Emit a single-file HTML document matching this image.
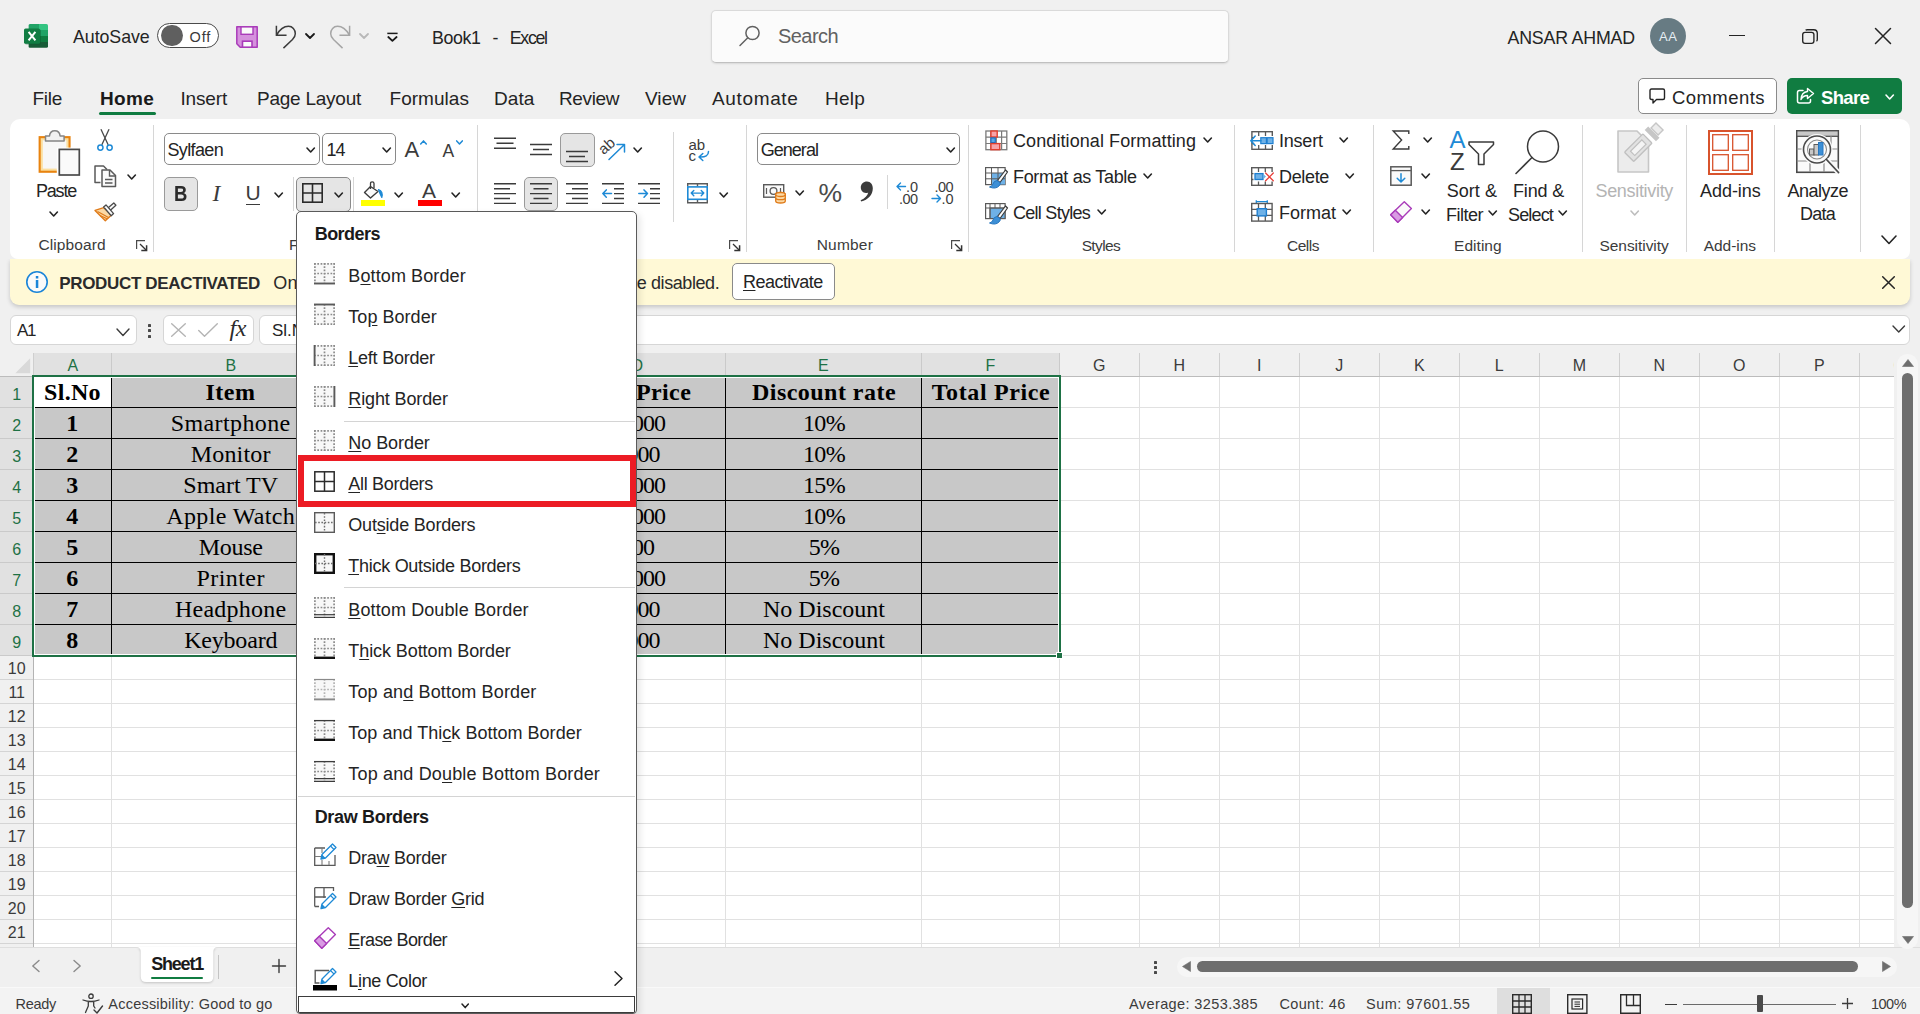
<!DOCTYPE html>
<html>
<head>
<meta charset="utf-8">
<title>Excel</title>
<style>
*{box-sizing:border-box;margin:0;padding:0}
html,body{width:1920px;height:1014px;overflow:hidden;background:#f0f0f0;font-family:"Liberation Sans",sans-serif;color:#242424}
.abs{position:absolute}
.t{position:absolute;white-space:nowrap;line-height:1;color:#242424}
svg{position:absolute;overflow:visible}
#ribbon{position:absolute;left:10px;top:118.7px;width:1900px;height:140.3px;background:#fff;border-radius:10px 10px 8px 8px;}
#notif{position:absolute;left:10px;top:259px;width:1900px;height:45.8px;background:#fff9d6;border-radius:0 0 9px 9px;box-shadow:0 2px 4px rgba(0,0,0,.18);clip-path:inset(0 -12px -12px -12px)}
.vsep{position:absolute;width:1px;background:#d6d6d6}
.grp{position:absolute;white-space:nowrap;line-height:1;font-size:15px;color:#3b3b3b;top:238px}
.combo{position:absolute;background:#fff;border:1px solid #8a8a8a;border-radius:5px}
.btnsel{position:absolute;background:#e5e5e5;border:1px solid #9a9a9a;border-radius:5px}
/* grid */
#grid{position:absolute;left:0;top:0;width:1920px;height:947px;overflow:hidden;clip-path:inset(353px 0 0 0)}
.ch{position:absolute;top:0;height:23px;font-size:17px;line-height:23px;text-align:center;color:#3b3b3b;border-right:1px solid #d0d0d0;background:#f0f0f0}
.ch.sel{background:#e1e1e1;color:#1e7145}
.rh{position:absolute;left:0;width:33px;font-size:17px;text-align:center;color:#3b3b3b;background:#f0f0f0;border-bottom:1px solid #d0d0d0}
.rh.sel{background:#e1e1e1;color:#1e7145}
.gl{position:absolute;background:#e1e1e1}
.cell{position:absolute;background:#c8c8c8;font-family:"Liberation Serif",serif;font-size:23px;text-align:center;color:#000;white-space:nowrap;overflow:hidden}
.bl{position:absolute;background:#000}
/* menu */
#menu{position:absolute;left:296px;top:211px;width:341px;height:803px;background:#fff;border:1px solid #5a5a5a;border-radius:5px 5px 4px 4px;overflow:hidden;box-shadow:3px 3px 7px rgba(0,0,0,.10)}
.mi{position:absolute;left:51px;white-space:nowrap;line-height:1;font-size:17px;color:#242424}
.mh{position:absolute;left:17px;white-space:nowrap;line-height:1;font-size:17px;font-weight:bold;color:#1a1a1a}
.u{text-decoration:underline;text-underline-offset:2px}
</style>
</head>
<body>
<!-- TITLEBAR -->
<div id="titlebar">
<svg style="left:24px;top:24px;" width="24" height="24" viewBox="0 0 24 24">
<defs><clipPath id="xlc"><rect x="4.4" y="0" width="19.6" height="23.8" rx="1.6"/></clipPath></defs>
<g clip-path="url(#xlc)">
<rect x="4.4" y="0" width="10.6" height="6" fill="#21a366"/><rect x="15" y="0" width="9" height="6" fill="#33c481"/>
<rect x="4.4" y="6" width="10.6" height="6" fill="#107c41"/><rect x="15" y="6" width="9" height="6" fill="#21a366"/>
<rect x="4.4" y="12" width="10.6" height="6" fill="#185c37"/><rect x="15" y="12" width="9" height="6" fill="#107c41"/>
<rect x="4.4" y="18" width="19.6" height="6" fill="#185c37"/>
</g>
<rect x="1" y="5.2" width="16" height="15.4" rx="1.5" fill="#0b5a2e" opacity="0.45"/>
<rect x="0" y="4.4" width="16" height="15.4" rx="1.5" fill="#117d43"/>
<path d="M4.6 7.8 L11.4 16.4 M11.4 7.8 L4.6 16.4" stroke="#fff" stroke-width="2" fill="none"/>
</svg>
<div class="t" style="left:73.00px;top:29.00px;font-size:17.8px;letter-spacing:-0.061px;">AutoSave</div>
<div class="abs" style="left:157px;top:22.7px;width:62.2px;height:25.3px;border:1.3px solid #4a4a4a;border-radius:13px;background:#fff"></div>
<div class="abs" style="left:161px;top:24.8px;width:21.6px;height:21.6px;border-radius:50%;background:#5f5f5f"></div>
<div class="t" style="left:189.60px;top:30.00px;font-size:14.5px;letter-spacing:0.775px;color:#3a3a3a;">Off</div>
<svg style="left:236px;top:26px;" width="22" height="22" viewBox="0 0 22 22">
<path d="M0.8 0.8 H21.2 V21.2 H4.2 L0.8 17.8 Z" fill="#d591dd" stroke="#a93bb9" stroke-width="1.5" stroke-linejoin="round"/>
<rect x="5" y="0.9" width="12" height="7.4" fill="#fafafa" stroke="#a93bb9" stroke-width="1.4"/>
<rect x="6.5" y="15.2" width="9.5" height="6" fill="#fafafa" stroke="#a93bb9" stroke-width="1.6"/>
</svg>
<svg style="left:275px;top:25px;" width="22" height="24" viewBox="0 0 22 24"><path d="M1.4 1.5 V10.2 H10.8 M1.8 9.8 C5 4 9.5 1.3 13.5 1.3 C17.5 1.3 20.3 4.5 20.3 8.7 C20.3 11 19.2 12.8 17.5 14.5 L9 22.6" fill="none" stroke="#3b3b3b" stroke-width="1.5" stroke-linecap="square" stroke-linejoin="miter"/></svg>
<svg style="left:306.2px;top:34.4px;" width="8" height="4" viewBox="0 0 8 4"><path d="M0 0 L4.0 4 L8 0" fill="none" stroke="#1a1a1a" stroke-width="1.8" stroke-linecap="round" stroke-linejoin="round"/></svg>
<svg style="left:329px;top:25px;" width="22" height="24" viewBox="0 0 22 24"><g transform="translate(22 0) scale(-1 1)"><path d="M1.4 1.5 V10.2 H10.8 M1.8 9.8 C5 4 9.5 1.3 13.5 1.3 C17.5 1.3 20.3 4.5 20.3 8.7 C20.3 11 19.2 12.8 17.5 14.5 L9 22.6" fill="none" stroke="#a6a6a6" stroke-width="1.5" stroke-linecap="square" stroke-linejoin="miter"/></g></svg>
<svg style="left:360.2px;top:34.4px;" width="8" height="4" viewBox="0 0 8 4"><path d="M0 0 L4.0 4 L8 0" fill="none" stroke="#b8b8b8" stroke-width="1.8" stroke-linecap="round" stroke-linejoin="round"/></svg>
<svg style="left:387px;top:31.5px;" width="11" height="10" viewBox="0 0 11 10"><path d="M0.3 1.4 H10.6" stroke="#1a1a1a" stroke-width="1.5"/><path d="M1.3 5 L5.4 8.8 L9.6 5" fill="none" stroke="#1a1a1a" stroke-width="1.8" stroke-linecap="round" stroke-linejoin="round"/></svg>
<div class="t" style="left:432.00px;top:30.00px;font-size:17.8px;letter-spacing:-0.354px;">Book1</div>
<div class="t" style="left:492.50px;top:30.00px;font-size:17.8px;letter-spacing:0.072px;">-</div>
<div class="t" style="left:509.80px;top:30.00px;font-size:17.8px;letter-spacing:-1.325px;">Excel</div>
<div class="abs" style="left:711px;top:10px;width:518px;height:52.5px;background:#fbfbfb;border:1px solid #dadada;border-bottom-color:#c0c0c0;border-radius:5px;box-shadow:0 1px 2px rgba(0,0,0,.10)"></div>
<svg style="left:739px;top:25px;" width="22" height="22" viewBox="0 0 22 22"><circle cx="13.5" cy="8" r="6.6" fill="none" stroke="#616161" stroke-width="1.5"/><path d="M8.8 12.8 L1 20.5" stroke="#616161" stroke-width="1.5" stroke-linecap="round"/></svg>
<div class="t" style="left:778.00px;top:26.00px;font-size:20px;letter-spacing:-0.562px;color:#616161;">Search</div>
<div class="t" style="left:1507.50px;top:30.00px;font-size:17.8px;letter-spacing:-0.188px;">ANSAR AHMAD</div>
<div class="abs" style="left:1650px;top:17.8px;width:36.4px;height:36.2px;border-radius:50%;background:#677b83"></div>
<div class="t" style="left:1659.00px;top:30.00px;font-size:13px;letter-spacing:0.679px;color:#e6eef3;">AA</div>
<div class="abs" style="left:1729px;top:34.5px;width:16px;height:1.3px;background:#242424;"></div>
<svg style="left:1802.2px;top:28.8px;" width="16" height="15" viewBox="0 0 16 15"><rect x="0.7" y="3.3" width="11.2" height="11" rx="2.3" fill="none" stroke="#242424" stroke-width="1.35"/><path d="M3.6 1.3 Q4.2 0.7 5.4 0.7 H11.6 Q15.3 0.7 15.3 4.3 V10.4 Q15.3 11.6 14.5 12.2" fill="none" stroke="#242424" stroke-width="1.35"/></svg>
<svg style="left:1875px;top:28px;" width="16" height="16" viewBox="0 0 16 16"><path d="M0.5 0.5 L15.5 15.5 M15.5 0.5 L0.5 15.5" stroke="#242424" stroke-width="1.5" stroke-linecap="round"/></svg>
</div>
<!-- TABS -->
<div id="tabs">
<div class="t" style="left:32.50px;top:89.00px;font-size:19px;letter-spacing:-0.279px;">File</div>
<div class="t" style="left:180.50px;top:89.00px;font-size:19px;letter-spacing:-0.170px;">Insert</div>
<div class="t" style="left:257.00px;top:89.00px;font-size:19px;letter-spacing:-0.245px;">Page Layout</div>
<div class="t" style="left:389.50px;top:89.00px;font-size:19px;letter-spacing:0.040px;">Formulas</div>
<div class="t" style="left:494.00px;top:89.00px;font-size:19px;letter-spacing:0.092px;">Data</div>
<div class="t" style="left:559.00px;top:89.00px;font-size:19px;letter-spacing:-0.383px;">Review</div>
<div class="t" style="left:645.00px;top:89.00px;font-size:19px;letter-spacing:0.040px;">View</div>
<div class="t" style="left:712.00px;top:89.00px;font-size:19px;letter-spacing:0.647px;">Automate</div>
<div class="t" style="left:825.00px;top:89.00px;font-size:19px;letter-spacing:0.231px;">Help</div>
<div class="t" style="left:100.00px;top:89.00px;font-size:19px;letter-spacing:0.303px;font-weight:bold;color:#1a1a1a;">Home</div>
<div class="abs" style="left:99px;top:112px;width:57px;height:3px;background:#107c41;border-radius:1.5px"></div>
<div class="abs" style="left:1638px;top:78px;width:138.7px;height:35.5px;background:#fff;border:1px solid #8a8a8a;border-radius:5px"></div>
<svg style="left:1649px;top:88px;" width="17" height="17" viewBox="0 0 17 17"><path d="M2.5 1 H14 Q15.5 1 15.5 2.5 V10 Q15.5 11.5 14 11.5 H7.5 L4 15 V11.5 H2.5 Q1 11.5 1 10 V2.5 Q1 1 2.5 1 Z" fill="none" stroke="#242424" stroke-width="1.4" stroke-linejoin="round"/></svg>
<div class="t" style="left:1671.90px;top:89.00px;font-size:18.5px;letter-spacing:0.458px;">Comments</div>
<div class="abs" style="left:1787px;top:78px;width:115px;height:35.5px;background:#107c41;border-radius:5px"></div>
<svg style="left:1796px;top:87px;" width="19" height="18" viewBox="0 0 19 18"><path d="M7 3.5 H3.5 Q1.5 3.5 1.5 5.5 V14 Q1.5 16 3.5 16 H12.5 Q14.5 16 14.5 14 V12.5" fill="none" stroke="#fff" stroke-width="1.5" stroke-linecap="round"/><path d="M11.5 1.5 L17.5 6.5 L11.5 11.5 V8.5 Q7 8.5 5 12.5 Q5.5 5 11.5 4.5 Z" fill="none" stroke="#fff" stroke-width="1.4" stroke-linejoin="round"/></svg>
<div class="t" style="left:1821.00px;top:89.00px;font-size:18.5px;letter-spacing:-0.683px;font-weight:bold;color:#fff;">Share</div>
<svg style="left:1886.3px;top:95.0px;" width="7.4" height="4.0" viewBox="0 0 7.4 4.0"><path d="M0 0 L3.7 4.0 L7.4 0" fill="none" stroke="#fff" stroke-width="1.6" stroke-linecap="round" stroke-linejoin="round"/></svg>
</div>
<!-- RIBBON -->
<div id="ribbon"></div>
<div id="ribboncontent">
<div class="vsep" style="left:153px;top:125px;height:127px"></div>
<div class="vsep" style="left:477px;top:125px;height:127px"></div>
<div class="vsep" style="left:746px;top:125px;height:127px"></div>
<div class="vsep" style="left:968px;top:125px;height:127px"></div>
<div class="vsep" style="left:1234px;top:125px;height:127px"></div>
<div class="vsep" style="left:1373px;top:125px;height:127px"></div>
<div class="vsep" style="left:1582px;top:125px;height:127px"></div>
<div class="vsep" style="left:1686px;top:125px;height:127px"></div>
<div class="vsep" style="left:1774px;top:125px;height:127px"></div>
<div class="vsep" style="left:1860px;top:125px;height:127px"></div>
<div class="vsep" style="left:293px;top:177px;height:34px"></div>
<div class="vsep" style="left:353px;top:177px;height:34px"></div>
<div class="vsep" style="left:673px;top:132px;height:90px"></div>
<div class="vsep" style="left:886.5px;top:175px;height:34px"></div>
<svg style="left:38px;top:129px;" width="44" height="48" viewBox="0 0 44 48">
<rect x="0.6" y="7.1" width="32" height="36.7" fill="#e8830f"/>
<rect x="2.7" y="9.2" width="27.8" height="32.5" fill="#fbdf9f"/>
<rect x="4.8" y="11.3" width="23.6" height="28.3" fill="#f7f7f7"/>
<path d="M7.5 12 V7 H11.5 Q12 1.8 16.8 1.8 Q21.6 1.8 22.1 7 H26.1 V12 Z" fill="#f1f1f1" stroke="#858585" stroke-width="1.5" stroke-linejoin="round"/>
<rect x="18.8" y="18.6" width="24" height="29" fill="#fff"/>
<rect x="21.3" y="20.4" width="20" height="25.6" fill="#fafafa" stroke="#4a4a4a" stroke-width="1.7"/>
</svg>
<div class="t" style="left:36.00px;top:182.00px;font-size:18px;letter-spacing:-1.206px;">Paste</div>
<svg style="left:50.3px;top:211.5px;" width="7.4" height="4.0" viewBox="0 0 7.4 4.0"><path d="M0 0 L3.7 4.0 L7.4 0" fill="none" stroke="#242424" stroke-width="1.6" stroke-linecap="round" stroke-linejoin="round"/></svg>
<svg style="left:97px;top:129px;" width="16" height="23" viewBox="0 0 16 23">
<path d="M4.2 0.7 L11 15.5 M11.8 0.7 L5 15.5" stroke="#4a4a4a" stroke-width="1.3" fill="none" stroke-linecap="round"/>
<circle cx="3.4" cy="18.6" r="2.6" fill="none" stroke="#1e8ad6" stroke-width="1.5"/>
<circle cx="12.6" cy="18.6" r="2.6" fill="none" stroke="#1e8ad6" stroke-width="1.5"/>
</svg>
<svg style="left:94px;top:165px;" width="23" height="23" viewBox="0 0 23 23">
<path d="M6.5 17.5 H1 V1 H9.5 L13 4.5" fill="none" stroke="#5a5a5a" stroke-width="1.5" stroke-linejoin="round"/>
<path d="M8 5 H16 L21.5 10.5 V21.5 H8 Z" fill="#fafafa" stroke="#5a5a5a" stroke-width="1.5" stroke-linejoin="round"/>
<path d="M15.5 5 V11 H21.5" fill="none" stroke="#5a5a5a" stroke-width="1.4"/>
<path d="M11 14.5 H18.5 M11 18 H18.5" stroke="#5a5a5a" stroke-width="1.3"/>
</svg>
<svg style="left:127.8px;top:174.5px;" width="7.4" height="4.0" viewBox="0 0 7.4 4.0"><path d="M0 0 L3.7 4.0 L7.4 0" fill="none" stroke="#242424" stroke-width="1.6" stroke-linecap="round" stroke-linejoin="round"/></svg>
<svg style="left:94px;top:202px;" width="24" height="20" viewBox="0 0 24 20">
<path d="M1 8.4 L9.7 5.7 L17.8 12.8 L11.3 18.7 Z" fill="#fbd9a5" stroke="#e07b1a" stroke-width="1.4" stroke-linejoin="round"/>
<path d="M3.5 9.5 L14.5 15.5 M6 13.5 L13 16.8" stroke="#e07b1a" stroke-width="1.1" fill="none"/>
<path d="M14.2 5.8 L19.8 0.9 L21.9 3.3 L16.4 8.2 Z" fill="#fafafa" stroke="#4a4a4a" stroke-width="1.3" stroke-linejoin="round"/>
<path d="M9.6 5 L12 2.9 L19.6 11.6 L17.2 13.7 Z" fill="#fafafa" stroke="#4a4a4a" stroke-width="1.3" stroke-linejoin="round"/>
</svg>
<div class="t" style="left:38.50px;top:237.00px;font-size:15.5px;letter-spacing:0.084px;color:#3b3b3b;">Clipboard</div>
<svg style="left:136px;top:239.5px;" width="12" height="12" viewBox="0 0 12 12"><path d="M0.6 9 V0.6 H9" fill="none" stroke="#4a4a4a" stroke-width="1.2"/><path d="M4 4 L10.3 10.3" stroke="#333" stroke-width="1.3" fill="none"/><path d="M5.3 10.6 H10.6 V5.3" fill="none" stroke="#333" stroke-width="1.5"/></svg>
<div class="t" style="left:289.00px;top:237.00px;font-size:15.5px;color:#3b3b3b;">Font</div>
<div class="combo" style="left:164px;top:133px;width:155.5px;height:32px"></div>
<div class="t" style="left:167.50px;top:141.00px;font-size:18px;letter-spacing:-0.648px;">Sylfaen</div>
<svg style="left:307.3px;top:147.7px;" width="7.4" height="4.0" viewBox="0 0 7.4 4.0"><path d="M0 0 L3.7 4.0 L7.4 0" fill="none" stroke="#242424" stroke-width="1.6" stroke-linecap="round" stroke-linejoin="round"/></svg>
<div class="combo" style="left:322px;top:133px;width:74px;height:32px"></div>
<div class="t" style="left:326.50px;top:141.00px;font-size:18px;letter-spacing:-1.011px;">14</div>
<svg style="left:383.3px;top:147.7px;" width="7.4" height="4.0" viewBox="0 0 7.4 4.0"><path d="M0 0 L3.7 4.0 L7.4 0" fill="none" stroke="#242424" stroke-width="1.6" stroke-linecap="round" stroke-linejoin="round"/></svg>
<div class="t" style="left:404.50px;top:139.00px;font-size:22px;letter-spacing:1.326px;color:#3b3b3b;">A</div>
<svg style="left:419.5px;top:140px;" width="7" height="5" viewBox="0 0 7 5"><path d="M0.7 4 L3.5 0.9 L6.3 4" fill="none" stroke="#1e8ad6" stroke-width="1.5" stroke-linecap="round" stroke-linejoin="round"/></svg>
<div class="t" style="left:442.50px;top:143.00px;font-size:17.5px;letter-spacing:1.328px;color:#3b3b3b;">A</div>
<svg style="left:455.5px;top:140px;" width="7" height="5" viewBox="0 0 7 5"><path d="M0.7 0.9 L3.5 4 L6.3 0.9" fill="none" stroke="#1e8ad6" stroke-width="1.5" stroke-linecap="round" stroke-linejoin="round"/></svg>
<div class="btnsel" style="left:164px;top:177px;width:34px;height:34px"></div>
<div class="t" style="left:174.30px;top:184.00px;font-size:21.5px;font-weight:bold;color:#2b2b2b;transform:scaleX(.86);transform-origin:left center;">B</div>
<div class="t" style="left:212.50px;top:182.00px;font-size:23.5px;font-style:italic;color:#3b3b3b;font-family:'Liberation Serif',serif;">I</div>
<div class="t" style="left:245.50px;top:182.00px;font-size:21px;letter-spacing:-1.166px;color:#3b3b3b;">U</div>
<div class="abs" style="left:246px;top:203.6px;width:13.5px;height:1.4px;background:#3b3b3b;"></div>
<svg style="left:275.3px;top:193.0px;" width="7.4" height="4.0" viewBox="0 0 7.4 4.0"><path d="M0 0 L3.7 4.0 L7.4 0" fill="none" stroke="#242424" stroke-width="1.6" stroke-linecap="round" stroke-linejoin="round"/></svg>
<div class="btnsel" style="left:296px;top:176.5px;width:55px;height:35px;border-color:#8a8a8a"></div>
<svg style="left:301.5px;top:183px;" width="21" height="20" viewBox="0 0 21 20"><rect x="0.8" y="0.8" width="19.4" height="18.4" fill="none" stroke="#2b2b2b" stroke-width="1.6"/><path d="M10.5 0.8 V19.2 M0.8 10 H20.2" stroke="#2b2b2b" stroke-width="1.6"/></svg>
<svg style="left:334.8px;top:193.0px;" width="7.4" height="4.0" viewBox="0 0 7.4 4.0"><path d="M0 0 L3.7 4.0 L7.4 0" fill="none" stroke="#242424" stroke-width="1.6" stroke-linecap="round" stroke-linejoin="round"/></svg>
<svg style="left:361px;top:181px;" width="25" height="18" viewBox="0 0 25 18">
<path d="M9.5 5.5 L3.5 11.5 L9.5 17 L17 10.5 Z" fill="#fafafa" stroke="#3b3b3b" stroke-width="1.4" stroke-linejoin="round"/>
<path d="M9.5 8 V2.5 Q9.5 0.8 11.2 0.8 Q13 0.8 13 2.5 V7" fill="none" stroke="#3b3b3b" stroke-width="1.3"/>
<path d="M17.5 8.5 Q22.5 10.5 20.8 16.5 Q19 13 17.5 8.5 Z" fill="#1e8ad6" stroke="#1e8ad6" stroke-width="1.2" stroke-linejoin="round"/>
</svg>
<div class="abs" style="left:361px;top:200px;width:24px;height:5.7px;background:#ffff00;"></div>
<svg style="left:395.3px;top:193.0px;" width="7.4" height="4.0" viewBox="0 0 7.4 4.0"><path d="M0 0 L3.7 4.0 L7.4 0" fill="none" stroke="#242424" stroke-width="1.6" stroke-linecap="round" stroke-linejoin="round"/></svg>
<div class="t" style="left:422.00px;top:180.00px;font-size:21px;letter-spacing:1.493px;color:#3b3b3b;">A</div>
<div class="abs" style="left:418px;top:200px;width:24px;height:5.7px;background:#ff0000;"></div>
<svg style="left:452.3px;top:193.0px;" width="7.4" height="4.0" viewBox="0 0 7.4 4.0"><path d="M0 0 L3.7 4.0 L7.4 0" fill="none" stroke="#242424" stroke-width="1.6" stroke-linecap="round" stroke-linejoin="round"/></svg>
<svg style="left:494px;top:136px;" width="24" height="14" viewBox="0 0 24 14"><path d="M0 2.2 H22 M2.5 7.2 H19.5 M0 12.2 H22 " stroke="#3b3b3b" stroke-width="1.4" fill="none"/></svg>
<svg style="left:530px;top:142px;" width="24" height="14" viewBox="0 0 24 14"><path d="M0 2.5 H22 M3 7.5 H19 M0 12.5 H22 " stroke="#3b3b3b" stroke-width="1.4" fill="none"/></svg>
<div class="btnsel" style="left:560px;top:133px;width:34.5px;height:34px"></div>
<svg style="left:566px;top:149px;" width="24" height="14" viewBox="0 0 24 14"><path d="M0 2.5 H22 M3 7.5 H19 M0 12.5 H22 " stroke="#3b3b3b" stroke-width="1.4" fill="none"/></svg>
<svg style="left:601px;top:137px;" width="25" height="24" viewBox="0 0 25 24">
<text x="-0.5" y="14.5" font-family="Liberation Sans" font-size="15" fill="#3b3b3b" transform="rotate(-42 6 12)">ab</text>
<path d="M8 22.5 L23 8 M16 7.5 H23.5 V15" fill="none" stroke="#1e8ad6" stroke-width="1.5" stroke-linecap="round" stroke-linejoin="round"/>
</svg>
<svg style="left:633.8px;top:147.7px;" width="7.4" height="4.0" viewBox="0 0 7.4 4.0"><path d="M0 0 L3.7 4.0 L7.4 0" fill="none" stroke="#242424" stroke-width="1.6" stroke-linecap="round" stroke-linejoin="round"/></svg>
<svg style="left:494px;top:183px;" width="24" height="21" viewBox="0 0 24 21"><path d="M0 0.8 H22 M0 5.7 H16 M0 10.6 H22 M0 15.5 H16 M0 20.4 H22 " stroke="#3b3b3b" stroke-width="1.4" fill="none"/></svg>
<div class="btnsel" style="left:524px;top:177px;width:34px;height:34px"></div>
<svg style="left:530px;top:183px;" width="24" height="21" viewBox="0 0 24 21"><path d="M0 0.8 H22 M3.5 5.7 H18.5 M0 10.6 H22 M3.5 15.5 H18.5 M0 20.4 H22 " stroke="#3b3b3b" stroke-width="1.4" fill="none"/></svg>
<svg style="left:566px;top:183px;" width="24" height="21" viewBox="0 0 24 21"><path d="M0 0.8 H22 M6 5.7 H22 M0 10.6 H22 M6 15.5 H22 M0 20.4 H22 " stroke="#3b3b3b" stroke-width="1.4" fill="none"/></svg>
<svg style="left:601.5px;top:183px;" width="24" height="21" viewBox="0 0 24 21"><path d="M0 0.8 H22 M12 5.7 H22 M12 10.6 H22 M12 15.5 H22 M0 20.4 H22 " stroke="#3b3b3b" stroke-width="1.4" fill="none"/><path d="M0.8 10.6 H9.5 M4.3 6.9 L0.8 10.6 L4.3 14.3" fill="none" stroke="#1e8ad6" stroke-width="1.5" stroke-linecap="round" stroke-linejoin="round"/></svg>
<svg style="left:637.5px;top:183px;" width="24" height="21" viewBox="0 0 24 21"><path d="M0 0.8 H22 M12 5.7 H22 M12 10.6 H22 M12 15.5 H22 M0 20.4 H22 " stroke="#3b3b3b" stroke-width="1.4" fill="none"/><path d="M0.8 10.6 H9.5 M6 6.9 L9.5 10.6 L6 14.3" fill="none" stroke="#1e8ad6" stroke-width="1.5" stroke-linecap="round" stroke-linejoin="round"/></svg>
<svg style="left:687px;top:139px;" width="25" height="25" viewBox="0 0 25 25">
<text x="1.5" y="11" font-family="Liberation Sans" font-size="15" fill="#3b3b3b" textLength="16.5">ab</text>
<text x="1.5" y="21.5" font-family="Liberation Sans" font-size="15" fill="#3b3b3b">c</text>
<path d="M21.5 12.5 Q21.5 18.5 12.5 18 M15.8 14.5 L12 18 L15.8 21.5" fill="none" stroke="#1e8ad6" stroke-width="1.5" stroke-linecap="round" stroke-linejoin="round"/>
</svg>
<svg style="left:686.7px;top:183px;" width="22" height="21" viewBox="0 0 22 21">
<path d="M0.7 3.6 V0.7 H20.3 V3.6 M10.5 0.7 V3.6 M0.7 16.6 V19.7 H20.3 V16.6 M10.5 16.6 V19.7" fill="none" stroke="#5a5a5a" stroke-width="1.4"/>
<rect x="0.8" y="3.9" width="19.4" height="12.4" fill="#fff" stroke="#1e8ad6" stroke-width="1.6"/>
<path d="M4.2 10.1 H16.8 M6.8 7.5 L4.2 10.1 L6.8 12.7 M14.2 7.5 L16.8 10.1 L14.2 12.7" fill="none" stroke="#1e8ad6" stroke-width="1.4" stroke-linecap="round" stroke-linejoin="round"/>
</svg>
<svg style="left:720.3px;top:193.0px;" width="7.4" height="4.0" viewBox="0 0 7.4 4.0"><path d="M0 0 L3.7 4.0 L7.4 0" fill="none" stroke="#242424" stroke-width="1.6" stroke-linecap="round" stroke-linejoin="round"/></svg>
<svg style="left:729px;top:239.5px;" width="12" height="12" viewBox="0 0 12 12"><path d="M0.6 9 V0.6 H9" fill="none" stroke="#4a4a4a" stroke-width="1.2"/><path d="M4 4 L10.3 10.3" stroke="#333" stroke-width="1.3" fill="none"/><path d="M5.3 10.6 H10.6 V5.3" fill="none" stroke="#333" stroke-width="1.5"/></svg>
<div class="combo" style="left:757px;top:133px;width:202.5px;height:32px"></div>
<div class="t" style="left:760.70px;top:141.00px;font-size:18px;letter-spacing:-0.963px;">General</div>
<svg style="left:946.8px;top:147.7px;" width="7.4" height="4.0" viewBox="0 0 7.4 4.0"><path d="M0 0 L3.7 4.0 L7.4 0" fill="none" stroke="#242424" stroke-width="1.6" stroke-linecap="round" stroke-linejoin="round"/></svg>
<svg style="left:763px;top:184px;" width="24" height="20" viewBox="0 0 24 20">
<rect x="0.7" y="0.7" width="20" height="12.5" fill="#fafafa" stroke="#5a5a5a" stroke-width="1.4"/>
<circle cx="10.5" cy="7" r="3.4" fill="none" stroke="#5a5a5a" stroke-width="1.3"/>
<path d="M3.5 4 V10 M17.5 4 V10" stroke="#5a5a5a" stroke-width="1.2"/>
<ellipse cx="17.5" cy="10.5" rx="4.8" ry="2" fill="#fbd9a5" stroke="#e07b1a" stroke-width="1.3"/>
<path d="M12.7 10.5 V17 Q12.7 19 17.5 19 Q22.3 19 22.3 17 V10.5 M12.7 13.7 Q12.7 15.7 17.5 15.7 Q22.3 15.7 22.3 13.7" fill="#fbd9a5" stroke="#e07b1a" stroke-width="1.3"/>
<ellipse cx="17.5" cy="10.5" rx="4.8" ry="2" fill="#fbd9a5" stroke="#e07b1a" stroke-width="1.3"/>
</svg>
<svg style="left:796.3px;top:191.0px;" width="7.4" height="4.0" viewBox="0 0 7.4 4.0"><path d="M0 0 L3.7 4.0 L7.4 0" fill="none" stroke="#242424" stroke-width="1.6" stroke-linecap="round" stroke-linejoin="round"/></svg>
<div class="t" style="left:818.50px;top:180.00px;font-size:26.5px;letter-spacing:-0.563px;color:#4a4a4a;">%</div>
<svg style="left:859px;top:181px;" width="15" height="22" viewBox="0 0 15 22"><path d="M8 0.6 C11.6 0.6 13.8 3.6 13.8 7.6 C13.8 14 9 19 2.2 20.6 L1.6 19.2 C6 17.2 8.6 14.6 9.2 11.4 C8.6 11.8 7.8 12 7 12 C3.8 12 1.8 9.6 1.8 6.6 C1.8 3.2 4.4 0.6 8 0.6 Z" fill="#3b3b3b"/></svg>
<svg style="left:896px;top:180px;" width="23" height="25" viewBox="0 0 23 25">
<path d="M1 6.5 H9.5 M4.5 3 L1 6.5 L4.5 10" fill="none" stroke="#1e8ad6" stroke-width="1.4" stroke-linecap="round" stroke-linejoin="round"/>
<text x="10" y="11.8" font-family="Liberation Sans" font-size="14.5" fill="#3b3b3b">.0</text>
<text x="3" y="24" font-family="Liberation Sans" font-size="14.5" fill="#3b3b3b" textLength="19">.00</text>
</svg>
<svg style="left:931px;top:180px;" width="23" height="25" viewBox="0 0 23 25">
<text x="3.5" y="11.8" font-family="Liberation Sans" font-size="14.5" fill="#3b3b3b" textLength="19">.00</text>
<path d="M1 18.5 H9.5 M6 15 L9.5 18.5 L6 22" fill="none" stroke="#1e8ad6" stroke-width="1.4" stroke-linecap="round" stroke-linejoin="round"/>
<text x="10.5" y="24" font-family="Liberation Sans" font-size="14.5" fill="#3b3b3b">.0</text>
</svg>
<div class="t" style="left:816.70px;top:237.00px;font-size:15.5px;letter-spacing:0.195px;color:#3b3b3b;">Number</div>
<svg style="left:951px;top:239.5px;" width="12" height="12" viewBox="0 0 12 12"><path d="M0.6 9 V0.6 H9" fill="none" stroke="#4a4a4a" stroke-width="1.2"/><path d="M4 4 L10.3 10.3" stroke="#333" stroke-width="1.3" fill="none"/><path d="M5.3 10.6 H10.6 V5.3" fill="none" stroke="#333" stroke-width="1.5"/></svg>
<svg style="left:985px;top:130px;" width="23" height="21" viewBox="0 0 23 21">
<rect x="0.9" y="1" width="20.9" height="18.7" fill="#fff" stroke="#7a7a7a" stroke-width="1.3"/>
<path d="M0.9 7.2 H21.8 M0.9 13.5 H21.8 M5.9 1 V19.7 M11.3 1 V19.7 M16.6 1 V19.7" stroke="#7a7a7a" stroke-width="1.2" fill="none"/>
<rect x="5.9" y="1" width="6.3" height="6" fill="#f7a3a8" stroke="#e03e2d" stroke-width="1.4"/>
<rect x="5.9" y="7.9" width="4.4" height="4.7" fill="#5aa7e6" stroke="#1e6fc0" stroke-width="1.2"/>
<rect x="5.9" y="13.6" width="8.9" height="6.1" fill="#f7a3a8" stroke="#e03e2d" stroke-width="1.4"/>
</svg>
<div class="t" style="left:1013.00px;top:132.00px;font-size:18px;letter-spacing:0.087px;">Conditional Formatting</div>
<svg style="left:1203.6px;top:137.5px;" width="7.4" height="4.0" viewBox="0 0 7.4 4.0"><path d="M0 0 L3.7 4.0 L7.4 0" fill="none" stroke="#242424" stroke-width="1.6" stroke-linecap="round" stroke-linejoin="round"/></svg>
<svg style="left:985px;top:166px;" width="24" height="22" viewBox="0 0 24 22">
<rect x="0.6" y="1.6" width="19.5" height="17" fill="#fff" stroke="#5a5a5a" stroke-width="1.2"/>
<rect x="6.5" y="7" width="13.5" height="11.5" fill="#6fb1e6"/>
<path d="M0.6 7 H20 M0.6 12.8 H20 M6.5 1.6 V18.6 M13 1.6 V18.6" stroke="#5a5a5a" stroke-width="1" fill="none"/>
<g transform="translate(0 0)"><path d="M20.5 4 L12.5 14.5 L15 16.5 L22.5 6 Z" fill="#fafafa" stroke="#3b3b3b" stroke-width="1.2" stroke-linejoin="round"/><path d="M12 14.5 Q8.5 15 8 18 Q7 20.5 4.5 21 Q10.5 23.5 14 20 Q16 18 15 16.5 Z" fill="#3c8fd6" stroke="#2877c0" stroke-width="1"/></g></svg>
<div class="t" style="left:1013.00px;top:168.00px;font-size:18px;letter-spacing:-0.335px;">Format as Table</div>
<svg style="left:1143.6px;top:173.5px;" width="7.4" height="4.0" viewBox="0 0 7.4 4.0"><path d="M0 0 L3.7 4.0 L7.4 0" fill="none" stroke="#242424" stroke-width="1.6" stroke-linecap="round" stroke-linejoin="round"/></svg>
<svg style="left:985px;top:202px;" width="24" height="22" viewBox="0 0 24 22">
<rect x="0.6" y="1.6" width="19.5" height="15" fill="#fff" stroke="#5a5a5a" stroke-width="1.2"/>
<rect x="5" y="6" width="15" height="10.5" fill="#6fb1e6" stroke="#5a5a5a" stroke-width="1"/>
<path d="M0.6 6 H20 M5 1.6 V16.6 M10 1.6 V6 M15 1.6 V6" stroke="#5a5a5a" stroke-width="1" fill="none"/>
<g transform="translate(0 0)"><path d="M20.5 4 L12.5 14.5 L15 16.5 L22.5 6 Z" fill="#fafafa" stroke="#3b3b3b" stroke-width="1.2" stroke-linejoin="round"/><path d="M12 14.5 Q8.5 15 8 18 Q7 20.5 4.5 21 Q10.5 23.5 14 20 Q16 18 15 16.5 Z" fill="#3c8fd6" stroke="#2877c0" stroke-width="1"/></g></svg>
<div class="t" style="left:1013.00px;top:204.00px;font-size:18px;letter-spacing:-0.730px;">Cell Styles</div>
<svg style="left:1097.6px;top:209.5px;" width="7.4" height="4.0" viewBox="0 0 7.4 4.0"><path d="M0 0 L3.7 4.0 L7.4 0" fill="none" stroke="#242424" stroke-width="1.6" stroke-linecap="round" stroke-linejoin="round"/></svg>
<div class="t" style="left:1081.70px;top:238.00px;font-size:15.5px;letter-spacing:-0.651px;color:#3b3b3b;">Styles</div>
<svg style="left:1250px;top:130.5px;" width="25" height="19" viewBox="0 0 25 19"><g transform="translate(1.2 0)"><rect x="0.7" y="0.7" width="20.4" height="17.6" fill="#fff" stroke="#5a5a5a" stroke-width="1.4"/>
<path d="M0.7 6.6 H21.1 M0.7 12.5 H21.1 M7.5 0.7 V18.3 M14.3 0.7 V18.3" stroke="#5a5a5a" stroke-width="1.3" fill="none"/><rect x="3" y="5" width="19.5" height="9" fill="#fff"/><rect x="9.6" y="6.7" width="5.6" height="5.9" fill="#6fb1e6" stroke="#1e7fd0" stroke-width="1.2"/><rect x="16" y="6.7" width="5.8" height="5.9" fill="#6fb1e6" stroke="#1e7fd0" stroke-width="1.2"/></g><path d="M0.8 9.7 H11 M5.2 5 L0.8 9.7 L5.2 14.4" fill="none" stroke="#1e8ad6" stroke-width="1.5" stroke-linecap="round" stroke-linejoin="round"/></svg>
<div class="t" style="left:1279.00px;top:132.00px;font-size:18px;letter-spacing:-0.220px;">Insert</div>
<svg style="left:1339.6px;top:137.5px;" width="7.4" height="4.0" viewBox="0 0 7.4 4.0"><path d="M0 0 L3.7 4.0 L7.4 0" fill="none" stroke="#242424" stroke-width="1.6" stroke-linecap="round" stroke-linejoin="round"/></svg>
<svg style="left:1251.2px;top:166.5px;" width="24" height="19" viewBox="0 0 24 19"><rect x="0.7" y="0.7" width="20.4" height="17.6" fill="#fff" stroke="#5a5a5a" stroke-width="1.4"/>
<path d="M0.7 6.6 H21.1 M0.7 12.5 H21.1 M7.5 0.7 V18.3 M14.3 0.7 V18.3" stroke="#5a5a5a" stroke-width="1.3" fill="none"/><rect x="2.5" y="5" width="20.5" height="9.5" fill="#fff"/><rect x="4" y="6.6" width="8" height="5.9" fill="#6fb1e6" stroke="#1e7fd0" stroke-width="1.3"/><path d="M12.5 7.2 L15 9.6 L12.5 12 Z" fill="#6fb1e6"/><path d="M14.6 6 L22.3 13.8 M22.3 6 L14.6 13.8" stroke="#e8403a" stroke-width="1.3" stroke-linecap="round"/></svg>
<div class="t" style="left:1279.00px;top:168.00px;font-size:18px;letter-spacing:-0.339px;">Delete</div>
<svg style="left:1345.6px;top:173.5px;" width="7.4" height="4.0" viewBox="0 0 7.4 4.0"><path d="M0 0 L3.7 4.0 L7.4 0" fill="none" stroke="#242424" stroke-width="1.6" stroke-linecap="round" stroke-linejoin="round"/></svg>
<svg style="left:1251.2px;top:199.5px;" width="24" height="22" viewBox="0 0 24 22"><path d="M5.3 1.7 H16.3 M5.3 0.2 V3.4 M16.3 0.2 V3.4" stroke="#1e8ad6" stroke-width="1.3" fill="none"/><g transform="translate(0 2.8)"><rect x="0.7" y="0.7" width="20.4" height="17.6" fill="#fff" stroke="#5a5a5a" stroke-width="1.4"/>
<path d="M0.7 6.6 H21.1 M0.7 12.5 H21.1 M7.5 0.7 V18.3 M14.3 0.7 V18.3" stroke="#5a5a5a" stroke-width="1.3" fill="none"/><rect x="6.2" y="5.9" width="9.2" height="7.2" fill="#6fb1e6" stroke="#1e7fd0" stroke-width="1.4"/></g></svg>
<div class="t" style="left:1279.00px;top:204.00px;font-size:18px;letter-spacing:-0.001px;">Format</div>
<svg style="left:1342.6px;top:209.5px;" width="7.4" height="4.0" viewBox="0 0 7.4 4.0"><path d="M0 0 L3.7 4.0 L7.4 0" fill="none" stroke="#242424" stroke-width="1.6" stroke-linecap="round" stroke-linejoin="round"/></svg>
<div class="t" style="left:1287.00px;top:238.00px;font-size:15.5px;letter-spacing:-0.490px;color:#3b3b3b;">Cells</div>
<svg style="left:1392px;top:130px;" width="19" height="20" viewBox="0 0 19 20"><path d="M16.8 4 V1 H1.2 L9.6 10 L1.2 19 H16.8 V16" fill="none" stroke="#3b3b3b" stroke-width="1.4" stroke-linejoin="miter"/></svg>
<svg style="left:1423.6px;top:137.5px;" width="7.4" height="4.0" viewBox="0 0 7.4 4.0"><path d="M0 0 L3.7 4.0 L7.4 0" fill="none" stroke="#242424" stroke-width="1.6" stroke-linecap="round" stroke-linejoin="round"/></svg>
<svg style="left:1390px;top:166px;" width="22" height="20" viewBox="0 0 22 20"><rect x="0.8" y="0.8" width="20.4" height="18.4" fill="#fafafa" stroke="#5a5a5a" stroke-width="1.5"/><path d="M0.8 4.6 H21.2" stroke="#5a5a5a" stroke-width="1.3"/><path d="M11 7.8 V15.8 M7.2 12.2 L11 16 L14.8 12.2" fill="none" stroke="#1e8ad6" stroke-width="1.5" stroke-linecap="round" stroke-linejoin="round"/></svg>
<svg style="left:1422.3px;top:173.5px;" width="7.4" height="4.0" viewBox="0 0 7.4 4.0"><path d="M0 0 L3.7 4.0 L7.4 0" fill="none" stroke="#242424" stroke-width="1.6" stroke-linecap="round" stroke-linejoin="round"/></svg>
<svg style="left:1390px;top:201px;" width="23" height="22" viewBox="0 0 23 22"><path d="M14.3 0.8 L21.4 7.6 L7.8 21.2 L0.7 13.8 Z" fill="#fafafa" stroke="#a93bb9" stroke-width="1.4" stroke-linejoin="round"/><path d="M5.3 9.2 L12.6 16.4 L7.8 21.2 L0.7 13.8 Z" fill="#d99be3" stroke="#a93bb9" stroke-width="1.4" stroke-linejoin="round"/></svg>
<svg style="left:1422.3px;top:209.5px;" width="7.4" height="4.0" viewBox="0 0 7.4 4.0"><path d="M0 0 L3.7 4.0 L7.4 0" fill="none" stroke="#242424" stroke-width="1.6" stroke-linecap="round" stroke-linejoin="round"/></svg>
<div class="t" style="left:1449.50px;top:128.00px;font-size:24px;letter-spacing:1.992px;color:#1e8ad6;">A</div>
<div class="t" style="left:1450.00px;top:150.00px;font-size:24px;letter-spacing:2.340px;color:#3b3b3b;">Z</div>
<svg style="left:1468px;top:141px;" width="27" height="25" viewBox="0 0 27 25"><path d="M1 1 H25.5 V3.5 L16 13 V23.5 H10.5 V13 L1 3.5 Z" fill="none" stroke="#3b3b3b" stroke-width="1.5" stroke-linejoin="round"/></svg>
<div class="t" style="left:1446.70px;top:182.00px;font-size:18px;letter-spacing:0.047px;">Sort &amp;</div>
<div class="t" style="left:1446.00px;top:206.00px;font-size:18px;letter-spacing:-0.500px;">Filter</div>
<svg style="left:1489.3px;top:211.0px;" width="7.4" height="4.0" viewBox="0 0 7.4 4.0"><path d="M0 0 L3.7 4.0 L7.4 0" fill="none" stroke="#242424" stroke-width="1.6" stroke-linecap="round" stroke-linejoin="round"/></svg>
<svg style="left:1515px;top:129px;" width="46" height="46" viewBox="0 0 46 46"><circle cx="28" cy="17.5" r="15.5" fill="none" stroke="#3b3b3b" stroke-width="1.5"/><path d="M17 28.5 L1 44.5" stroke="#3b3b3b" stroke-width="1.6" stroke-linecap="round"/></svg>
<div class="t" style="left:1513.00px;top:182.00px;font-size:18px;letter-spacing:-0.170px;">Find &amp;</div>
<div class="t" style="left:1508.00px;top:206.00px;font-size:18px;letter-spacing:-0.838px;">Select</div>
<svg style="left:1559.3px;top:211.0px;" width="7.4" height="4.0" viewBox="0 0 7.4 4.0"><path d="M0 0 L3.7 4.0 L7.4 0" fill="none" stroke="#242424" stroke-width="1.6" stroke-linecap="round" stroke-linejoin="round"/></svg>
<div class="t" style="left:1454.00px;top:238.00px;font-size:15.5px;letter-spacing:0.044px;color:#3b3b3b;">Editing</div>
<svg style="left:1617px;top:127px;" width="43" height="47" viewBox="0 0 43 47">
<path d="M1 4 H20 L31.5 15.5 V45 H1 Z" fill="#ececec" stroke="#c6c6c6" stroke-width="1.6" stroke-linejoin="round"/>
<g transform="rotate(45 22 20)"><rect x="15.5" y="8" width="13" height="26" rx="1" fill="#e2e2e2" stroke="#c0c0c0" stroke-width="1.4"/><rect x="19" y="13" width="6" height="16" fill="#f4f4f4" stroke="#c0c0c0" stroke-width="1.2"/><rect x="14" y="-1" width="16" height="5" fill="#c6c6c6"/><rect x="17" y="-9" width="10" height="7" fill="#ececec" stroke="#c6c6c6" stroke-width="1.4"/></g>
</svg>
<div class="t" style="left:1595.50px;top:182.00px;font-size:18px;letter-spacing:-0.321px;color:#b4b4b4;">Sensitivity</div>
<svg style="left:1630.6px;top:211.3px;" width="7.4" height="4.0" viewBox="0 0 7.4 4.0"><path d="M0 0 L3.7 4.0 L7.4 0" fill="none" stroke="#bdbdbd" stroke-width="1.6" stroke-linecap="round" stroke-linejoin="round"/></svg>
<div class="t" style="left:1599.50px;top:238.00px;font-size:15.5px;letter-spacing:-0.052px;color:#3b3b3b;">Sensitivity</div>
<svg style="left:1708px;top:129.5px;" width="45" height="45" viewBox="0 0 45 45"><rect x="1" y="1" width="43" height="43" fill="none" stroke="#d8532c" stroke-width="2"/><rect x="4.7" y="4.7" width="15.6" height="15.6" fill="none" stroke="#d8532c" stroke-width="1.3"/><rect x="24.7" y="4.7" width="15.6" height="15.6" fill="none" stroke="#d8532c" stroke-width="1.3"/><rect x="4.7" y="24.7" width="15.6" height="15.6" fill="none" stroke="#d8532c" stroke-width="1.3"/><rect x="24.7" y="24.7" width="15.6" height="15.6" fill="none" stroke="#d8532c" stroke-width="1.3"/></svg>
<div class="t" style="left:1700.00px;top:182.00px;font-size:18px;letter-spacing:-0.047px;">Add-ins</div>
<div class="t" style="left:1703.70px;top:238.00px;font-size:15.5px;letter-spacing:-0.036px;color:#3b3b3b;">Add-ins</div>
<svg style="left:1796px;top:130px;" width="44" height="44" viewBox="0 0 44 44">
<rect x="0.8" y="0.8" width="41.5" height="41.5" fill="#fafafa" stroke="#4a4a4a" stroke-width="1.6"/>
<rect x="0.8" y="0.8" width="41.5" height="5.5" fill="#c8c8c8" stroke="#4a4a4a" stroke-width="1.2"/>
<path d="M0.8 19 H42 M0.8 31 H42 M14 31 V42 M28 31 V42 M35 6 V19" stroke="#8a8a8a" stroke-width="1.2"/>
<circle cx="21" cy="19.5" r="13.5" fill="#fafafa" stroke="#fafafa" stroke-width="4"/>
<circle cx="21" cy="19.5" r="13.5" fill="#fafafa" stroke="#4a4a4a" stroke-width="1.6"/>
<circle cx="21" cy="19.5" r="9.5" fill="none" stroke="#8a8a8a" stroke-width="1.1"/>
<rect x="13.5" y="19" width="4.5" height="6" fill="#c8c8c8" stroke="#5a5a5a" stroke-width="1"/>
<rect x="18" y="14.5" width="4.5" height="10.5" fill="#c8c8c8" stroke="#5a5a5a" stroke-width="1"/>
<rect x="22.5" y="12.5" width="4.5" height="12.5" fill="#3c8fd6" stroke="#2877c0" stroke-width="1"/>
<path d="M30.5 29.5 L42.5 42.5" stroke="#fafafa" stroke-width="5"/>
<path d="M30.5 29.5 L42.5 42.5" stroke="#4a4a4a" stroke-width="1.8" stroke-linecap="round"/>
</svg>
<div class="t" style="left:1787.50px;top:182.00px;font-size:18px;letter-spacing:-0.505px;">Analyze</div>
<div class="t" style="left:1800.00px;top:205.00px;font-size:18px;letter-spacing:-0.755px;">Data</div>
<svg style="left:1882.0px;top:235.75px;" width="14" height="7.5" viewBox="0 0 14 7.5"><path d="M0 0 L7.0 7.5 L14 0" fill="none" stroke="#242424" stroke-width="1.6" stroke-linecap="round" stroke-linejoin="round"/></svg>
</div>
<!-- NOTIF -->
<div id="notif"></div>
<div id="notifcontent">
<svg style="left:26px;top:271px;" width="22" height="22" viewBox="0 0 22 22"><circle cx="11" cy="11" r="10.2" fill="#fafafa" stroke="#1a84d8" stroke-width="1.6"/><rect x="9.8" y="5" width="2.5" height="2.5" fill="#1a84d8"/><rect x="9.8" y="9" width="2.5" height="8" fill="#1a84d8"/></svg>
<div class="t" style="left:59.30px;top:275.00px;font-size:17px;letter-spacing:-0.339px;font-weight:bold;color:#2b2b2b;">PRODUCT DEACTIVATED</div>
<div class="t" style="left:273.30px;top:274.00px;font-size:18px;letter-spacing:0.280px;color:#2b2b2b;">Once deactivated, most features of Excel ar</div>
<div class="t" style="left:636.80px;top:274.00px;font-size:18px;letter-spacing:-0.415px;color:#2b2b2b;">e disabled.</div>
<div class="abs" style="left:732px;top:263px;width:103px;height:36.5px;background:#fff;border:1px solid #8a8a8a;border-radius:5px"></div>
<div class="t" style="left:743.00px;top:273.00px;font-size:18px;letter-spacing:-0.534px;"><span class="u">R</span>eactivate</div>
<svg style="left:1881.5px;top:276px;" width="13" height="13" viewBox="0 0 13 13"><path d="M0.7 0.7 L12.3 12.3 M12.3 0.7 L0.7 12.3" stroke="#242424" stroke-width="1.5" stroke-linecap="round"/></svg>
</div>
<!-- FORMULA -->
<div id="formula">
<div class="abs" style="left:10px;top:315px;width:126.5px;height:30px;background:#fff;border:1px solid #d6d6d6;border-radius:6px"></div>
<div class="t" style="left:17.00px;top:322.00px;font-size:17px;letter-spacing:-1.397px;">A1</div>
<svg style="left:117.0px;top:328.75px;" width="12" height="6.5" viewBox="0 0 12 6.5"><path d="M0 0 L6.0 6.5 L12 0" fill="none" stroke="#3b3b3b" stroke-width="1.4" stroke-linecap="round" stroke-linejoin="round"/></svg>
<div class="abs" style="left:148px;top:323.5px;width:3px;height:3px;border-radius:0.6px;background:#4a4a4a"></div>
<div class="abs" style="left:148px;top:329.0px;width:3px;height:3px;border-radius:0.6px;background:#4a4a4a"></div>
<div class="abs" style="left:148px;top:334.5px;width:3px;height:3px;border-radius:0.6px;background:#4a4a4a"></div>
<div class="abs" style="left:162.5px;top:315px;width:91px;height:30px;background:#fff;border:1px solid #d6d6d6;border-radius:6px"></div>
<svg style="left:171px;top:323px;" width="15" height="14" viewBox="0 0 15 14"><path d="M0.7 0.7 L14.3 13.3 M14.3 0.7 L0.7 13.3" stroke="#b4b4b4" stroke-width="1.4" stroke-linecap="round"/></svg>
<svg style="left:198px;top:323px;" width="20" height="14" viewBox="0 0 20 14"><path d="M0.7 7.5 L6.5 13.3 L19.3 0.7" fill="none" stroke="#b4b4b4" stroke-width="1.4" stroke-linecap="round" stroke-linejoin="round"/></svg>
<div class="t" style="left:229.50px;top:316.00px;font-size:24px;letter-spacing:0.090px;font-style:italic;color:#2b2b2b;font-family:'Liberation Serif',serif;"><span style="letter-spacing:-0.5px">f</span>x</div>
<div class="abs" style="left:259px;top:315px;width:1650.5px;height:30px;background:#fff;border:1px solid #d6d6d6;border-radius:6px"></div>
<div class="t" style="left:272.00px;top:322.00px;font-size:17px;">Sl.No</div>
<svg style="left:1892.55px;top:326.0px;" width="11.5" height="6" viewBox="0 0 11.5 6"><path d="M0 0 L5.75 6 L11.5 0" fill="none" stroke="#3b3b3b" stroke-width="1.4" stroke-linecap="round" stroke-linejoin="round"/></svg>
</div>
<!-- GRID -->
<div id="grid">
<div class="abs" style="left:0px;top:353px;width:1894px;height:594px;background:#fff;"></div>
<div class="abs" style="left:0px;top:353px;width:1894px;height:23px;background:#f0f0f0;"></div>
<div class="abs" style="left:33px;top:353px;width:1026px;height:23px;background:#e1e1e1;"></div>
<div class="abs" style="left:0px;top:376px;width:1894px;height:1px;background:#bcbcbc;"></div>
<svg style="left:14.5px;top:357.5px;" width="16" height="16" viewBox="0 0 16 16"><path d="M15.2 0.3 V15.2 H0.3 Z" fill="#d9d9d9"/></svg>
<div class="t" style="left:67.46px;top:358.00px;font-size:16px;color:#1e7145;">A</div>
<div class="abs" style="left:111px;top:353px;width:1px;height:23px;background:#cacaca;"></div>
<div class="t" style="left:225.46px;top:358.00px;font-size:16px;color:#1e7145;">B</div>
<div class="abs" style="left:350px;top:353px;width:1px;height:23px;background:#cacaca;"></div>
<div class="t" style="left:444.02px;top:358.00px;font-size:16px;color:#1e7145;">C</div>
<div class="abs" style="left:549px;top:353px;width:1px;height:23px;background:#cacaca;"></div>
<div class="t" style="left:631.52px;top:358.00px;font-size:16px;color:#1e7145;">D</div>
<div class="abs" style="left:725px;top:353px;width:1px;height:23px;background:#cacaca;"></div>
<div class="t" style="left:817.96px;top:358.00px;font-size:16px;color:#1e7145;">E</div>
<div class="abs" style="left:921px;top:353px;width:1px;height:23px;background:#cacaca;"></div>
<div class="t" style="left:985.41px;top:358.00px;font-size:16px;color:#1e7145;">F</div>
<div class="abs" style="left:1059px;top:353px;width:1px;height:23px;background:#cacaca;"></div>
<div class="t" style="left:1093.08px;top:358.00px;font-size:16px;color:#3b3b3b;">G</div>
<div class="abs" style="left:1139px;top:353px;width:1px;height:23px;background:#cfcfcf;"></div>
<div class="t" style="left:1173.52px;top:358.00px;font-size:16px;color:#3b3b3b;">H</div>
<div class="abs" style="left:1219px;top:353px;width:1px;height:23px;background:#cfcfcf;"></div>
<div class="t" style="left:1257.08px;top:358.00px;font-size:16px;color:#3b3b3b;">I</div>
<div class="abs" style="left:1299px;top:353px;width:1px;height:23px;background:#cfcfcf;"></div>
<div class="t" style="left:1335.30px;top:358.00px;font-size:16px;color:#3b3b3b;">J</div>
<div class="abs" style="left:1379px;top:353px;width:1px;height:23px;background:#cfcfcf;"></div>
<div class="t" style="left:1413.96px;top:358.00px;font-size:16px;color:#3b3b3b;">K</div>
<div class="abs" style="left:1459px;top:353px;width:1px;height:23px;background:#cfcfcf;"></div>
<div class="t" style="left:1494.85px;top:358.00px;font-size:16px;color:#3b3b3b;">L</div>
<div class="abs" style="left:1539px;top:353px;width:1px;height:23px;background:#cfcfcf;"></div>
<div class="t" style="left:1572.64px;top:358.00px;font-size:16px;color:#3b3b3b;">M</div>
<div class="abs" style="left:1619px;top:353px;width:1px;height:23px;background:#cfcfcf;"></div>
<div class="t" style="left:1653.52px;top:358.00px;font-size:16px;color:#3b3b3b;">N</div>
<div class="abs" style="left:1699px;top:353px;width:1px;height:23px;background:#cfcfcf;"></div>
<div class="t" style="left:1733.08px;top:358.00px;font-size:16px;color:#3b3b3b;">O</div>
<div class="abs" style="left:1779px;top:353px;width:1px;height:23px;background:#cfcfcf;"></div>
<div class="t" style="left:1813.96px;top:358.00px;font-size:16px;color:#3b3b3b;">P</div>
<div class="abs" style="left:1859px;top:353px;width:1px;height:23px;background:#cfcfcf;"></div>
<div class="t" style="left:1893.58px;top:358.00px;font-size:16px;color:#3b3b3b;">Q</div>
<div class="abs" style="left:1940px;top:353px;width:1px;height:23px;background:#cfcfcf;"></div>
<div class="abs" style="left:33px;top:353px;width:1px;height:23px;background:#cfcfcf;"></div>
<div class="abs" style="left:0px;top:377px;width:33px;height:570px;background:#f0f0f0;"></div>
<div class="abs" style="left:0px;top:377px;width:33px;height:279px;background:#e1e1e1;"></div>
<div class="abs" style="left:33px;top:377px;width:1px;height:570px;background:#b4b4b4;"></div>
<div class="t" style="left:12.25px;top:387.00px;font-size:16px;color:#1e7145;">1</div>
<div class="abs" style="left:0px;top:407px;width:33px;height:1px;background:#cacaca;"></div>
<div class="abs" style="left:34px;top:407px;width:1860px;height:1px;background:#e1e1e1;"></div>
<div class="t" style="left:12.25px;top:418.00px;font-size:16px;color:#1e7145;">2</div>
<div class="abs" style="left:0px;top:438px;width:33px;height:1px;background:#cacaca;"></div>
<div class="abs" style="left:34px;top:438px;width:1860px;height:1px;background:#e1e1e1;"></div>
<div class="t" style="left:12.25px;top:449.00px;font-size:16px;color:#1e7145;">3</div>
<div class="abs" style="left:0px;top:469px;width:33px;height:1px;background:#cacaca;"></div>
<div class="abs" style="left:34px;top:469px;width:1860px;height:1px;background:#e1e1e1;"></div>
<div class="t" style="left:12.25px;top:480.00px;font-size:16px;color:#1e7145;">4</div>
<div class="abs" style="left:0px;top:500px;width:33px;height:1px;background:#cacaca;"></div>
<div class="abs" style="left:34px;top:500px;width:1860px;height:1px;background:#e1e1e1;"></div>
<div class="t" style="left:12.25px;top:511.00px;font-size:16px;color:#1e7145;">5</div>
<div class="abs" style="left:0px;top:531px;width:33px;height:1px;background:#cacaca;"></div>
<div class="abs" style="left:34px;top:531px;width:1860px;height:1px;background:#e1e1e1;"></div>
<div class="t" style="left:12.25px;top:542.00px;font-size:16px;color:#1e7145;">6</div>
<div class="abs" style="left:0px;top:562px;width:33px;height:1px;background:#cacaca;"></div>
<div class="abs" style="left:34px;top:562px;width:1860px;height:1px;background:#e1e1e1;"></div>
<div class="t" style="left:12.25px;top:573.00px;font-size:16px;color:#1e7145;">7</div>
<div class="abs" style="left:0px;top:593px;width:33px;height:1px;background:#cacaca;"></div>
<div class="abs" style="left:34px;top:593px;width:1860px;height:1px;background:#e1e1e1;"></div>
<div class="t" style="left:12.25px;top:604.00px;font-size:16px;color:#1e7145;">8</div>
<div class="abs" style="left:0px;top:624px;width:33px;height:1px;background:#cacaca;"></div>
<div class="abs" style="left:34px;top:624px;width:1860px;height:1px;background:#e1e1e1;"></div>
<div class="t" style="left:12.25px;top:635.00px;font-size:16px;color:#1e7145;">9</div>
<div class="abs" style="left:0px;top:655px;width:33px;height:1px;background:#cacaca;"></div>
<div class="abs" style="left:34px;top:655px;width:1860px;height:1px;background:#e1e1e1;"></div>
<div class="t" style="left:7.80px;top:661.00px;font-size:16px;color:#3b3b3b;">10</div>
<div class="abs" style="left:0px;top:679px;width:33px;height:1px;background:#d4d4d4;"></div>
<div class="abs" style="left:34px;top:679px;width:1860px;height:1px;background:#e1e1e1;"></div>
<div class="t" style="left:8.40px;top:685.00px;font-size:16px;color:#3b3b3b;">11</div>
<div class="abs" style="left:0px;top:703px;width:33px;height:1px;background:#d4d4d4;"></div>
<div class="abs" style="left:34px;top:703px;width:1860px;height:1px;background:#e1e1e1;"></div>
<div class="t" style="left:7.80px;top:709.00px;font-size:16px;color:#3b3b3b;">12</div>
<div class="abs" style="left:0px;top:727px;width:33px;height:1px;background:#d4d4d4;"></div>
<div class="abs" style="left:34px;top:727px;width:1860px;height:1px;background:#e1e1e1;"></div>
<div class="t" style="left:7.80px;top:733.00px;font-size:16px;color:#3b3b3b;">13</div>
<div class="abs" style="left:0px;top:751px;width:33px;height:1px;background:#d4d4d4;"></div>
<div class="abs" style="left:34px;top:751px;width:1860px;height:1px;background:#e1e1e1;"></div>
<div class="t" style="left:7.80px;top:757.00px;font-size:16px;color:#3b3b3b;">14</div>
<div class="abs" style="left:0px;top:775px;width:33px;height:1px;background:#d4d4d4;"></div>
<div class="abs" style="left:34px;top:775px;width:1860px;height:1px;background:#e1e1e1;"></div>
<div class="t" style="left:7.80px;top:781.00px;font-size:16px;color:#3b3b3b;">15</div>
<div class="abs" style="left:0px;top:799px;width:33px;height:1px;background:#d4d4d4;"></div>
<div class="abs" style="left:34px;top:799px;width:1860px;height:1px;background:#e1e1e1;"></div>
<div class="t" style="left:7.80px;top:805.00px;font-size:16px;color:#3b3b3b;">16</div>
<div class="abs" style="left:0px;top:823px;width:33px;height:1px;background:#d4d4d4;"></div>
<div class="abs" style="left:34px;top:823px;width:1860px;height:1px;background:#e1e1e1;"></div>
<div class="t" style="left:7.80px;top:829.00px;font-size:16px;color:#3b3b3b;">17</div>
<div class="abs" style="left:0px;top:847px;width:33px;height:1px;background:#d4d4d4;"></div>
<div class="abs" style="left:34px;top:847px;width:1860px;height:1px;background:#e1e1e1;"></div>
<div class="t" style="left:7.80px;top:853.00px;font-size:16px;color:#3b3b3b;">18</div>
<div class="abs" style="left:0px;top:871px;width:33px;height:1px;background:#d4d4d4;"></div>
<div class="abs" style="left:34px;top:871px;width:1860px;height:1px;background:#e1e1e1;"></div>
<div class="t" style="left:7.80px;top:877.00px;font-size:16px;color:#3b3b3b;">19</div>
<div class="abs" style="left:0px;top:895px;width:33px;height:1px;background:#d4d4d4;"></div>
<div class="abs" style="left:34px;top:895px;width:1860px;height:1px;background:#e1e1e1;"></div>
<div class="t" style="left:7.80px;top:901.00px;font-size:16px;color:#3b3b3b;">20</div>
<div class="abs" style="left:0px;top:919px;width:33px;height:1px;background:#d4d4d4;"></div>
<div class="abs" style="left:34px;top:919px;width:1860px;height:1px;background:#e1e1e1;"></div>
<div class="t" style="left:7.80px;top:925.00px;font-size:16px;color:#3b3b3b;">21</div>
<div class="abs" style="left:0px;top:943px;width:33px;height:1px;background:#d4d4d4;"></div>
<div class="abs" style="left:34px;top:943px;width:1860px;height:1px;background:#e1e1e1;"></div>
<div class="abs" style="left:0px;top:967px;width:33px;height:1px;background:#d4d4d4;"></div>
<div class="abs" style="left:34px;top:967px;width:1860px;height:1px;background:#e1e1e1;"></div>
<div class="abs" style="left:111px;top:377px;width:1px;height:570px;background:#e1e1e1;"></div>
<div class="abs" style="left:350px;top:377px;width:1px;height:570px;background:#e1e1e1;"></div>
<div class="abs" style="left:549px;top:377px;width:1px;height:570px;background:#e1e1e1;"></div>
<div class="abs" style="left:725px;top:377px;width:1px;height:570px;background:#e1e1e1;"></div>
<div class="abs" style="left:921px;top:377px;width:1px;height:570px;background:#e1e1e1;"></div>
<div class="abs" style="left:1059px;top:377px;width:1px;height:570px;background:#e1e1e1;"></div>
<div class="abs" style="left:1139px;top:377px;width:1px;height:570px;background:#e1e1e1;"></div>
<div class="abs" style="left:1219px;top:377px;width:1px;height:570px;background:#e1e1e1;"></div>
<div class="abs" style="left:1299px;top:377px;width:1px;height:570px;background:#e1e1e1;"></div>
<div class="abs" style="left:1379px;top:377px;width:1px;height:570px;background:#e1e1e1;"></div>
<div class="abs" style="left:1459px;top:377px;width:1px;height:570px;background:#e1e1e1;"></div>
<div class="abs" style="left:1539px;top:377px;width:1px;height:570px;background:#e1e1e1;"></div>
<div class="abs" style="left:1619px;top:377px;width:1px;height:570px;background:#e1e1e1;"></div>
<div class="abs" style="left:1699px;top:377px;width:1px;height:570px;background:#e1e1e1;"></div>
<div class="abs" style="left:1779px;top:377px;width:1px;height:570px;background:#e1e1e1;"></div>
<div class="abs" style="left:1859px;top:377px;width:1px;height:570px;background:#e1e1e1;"></div>
<div class="abs" style="left:1940px;top:377px;width:1px;height:570px;background:#e1e1e1;"></div>
<div class="abs" style="left:35px;top:378px;width:1023px;height:276px;background:#c8c8c8;"></div>
<div class="abs" style="left:35px;top:378px;width:76px;height:29px;background:#fff;"></div>
<div class="abs" style="left:35px;top:407px;width:1023px;height:1px;background:#000;"></div>
<div class="abs" style="left:35px;top:438px;width:1023px;height:1px;background:#000;"></div>
<div class="abs" style="left:35px;top:469px;width:1023px;height:1px;background:#000;"></div>
<div class="abs" style="left:35px;top:500px;width:1023px;height:1px;background:#000;"></div>
<div class="abs" style="left:35px;top:531px;width:1023px;height:1px;background:#000;"></div>
<div class="abs" style="left:35px;top:562px;width:1023px;height:1px;background:#000;"></div>
<div class="abs" style="left:35px;top:593px;width:1023px;height:1px;background:#000;"></div>
<div class="abs" style="left:35px;top:624px;width:1023px;height:1px;background:#000;"></div>
<div class="abs" style="left:111px;top:378px;width:1px;height:276px;background:#000;"></div>
<div class="abs" style="left:350px;top:378px;width:1px;height:276px;background:#000;"></div>
<div class="abs" style="left:549px;top:378px;width:1px;height:276px;background:#000;"></div>
<div class="abs" style="left:725px;top:378px;width:1px;height:276px;background:#000;"></div>
<div class="abs" style="left:921px;top:378px;width:1px;height:276px;background:#000;"></div>
<div class="abs" style="left:34px;top:377px;width:1025px;height:1px;background:#fff;"></div>
<div class="abs" style="left:34px;top:377px;width:1px;height:278px;background:#fff;"></div>
<div class="abs" style="left:34px;top:654px;width:1025px;height:1px;background:#fff;"></div>
<div class="abs" style="left:1058px;top:377px;width:1px;height:278px;background:#fff;"></div>
<div class="abs" style="left:32px;top:375px;width:1029px;height:282px;border:2px solid #1e7145"></div>
<div class="abs" style="left:1056px;top:652px;width:7px;height:7px;background:#fff;"></div>
<div class="abs" style="left:1057px;top:653px;width:5px;height:5px;background:#1e7145;"></div>
<div class="t" style="left:44.10px;top:380.00px;font-size:24px;letter-spacing:0.290px;font-weight:bold;color:#000;font-family:'Liberation Serif',serif;">Sl.No</div>
<div class="t" style="left:205.50px;top:380.00px;font-size:24px;letter-spacing:0.506px;font-weight:bold;color:#000;font-family:'Liberation Serif',serif;">Item</div>
<div class="t" style="left:401.88px;top:380.00px;font-size:24px;letter-spacing:0.403px;font-weight:bold;color:#000;font-family:'Liberation Serif',serif;">Quantity</div>
<div class="t" style="left:582.86px;top:380.00px;font-size:24px;letter-spacing:0.366px;font-weight:bold;color:#000;font-family:'Liberation Serif',serif;">Unit Price</div>
<div class="t" style="left:752.00px;top:380.00px;font-size:24px;letter-spacing:0.463px;font-weight:bold;color:#000;font-family:'Liberation Serif',serif;">Discount rate</div>
<div class="t" style="left:931.65px;top:380.00px;font-size:24px;letter-spacing:0.632px;font-weight:bold;color:#000;font-family:'Liberation Serif',serif;">Total Price</div>
<div class="t" style="left:66.26px;top:411.00px;font-size:24px;letter-spacing:0.480px;font-weight:bold;color:#000;font-family:'Liberation Serif',serif;">1</div>
<div class="t" style="left:170.80px;top:411.00px;font-size:24px;letter-spacing:0.382px;color:#000;font-family:'Liberation Serif',serif;">Smartphone</div>
<div class="t" style="left:437.50px;top:411.00px;font-size:24px;color:#000;font-family:'Liberation Serif',serif;">10</div>
<div class="t" style="left:610.00px;top:411.00px;font-size:24px;letter-spacing:-1.000px;color:#000;font-family:'Liberation Serif',serif;">20000</div>
<div class="t" style="left:803.10px;top:411.00px;font-size:24px;letter-spacing:-0.733px;color:#000;font-family:'Liberation Serif',serif;">10%</div>
<div class="t" style="left:66.26px;top:442.00px;font-size:24px;letter-spacing:0.480px;font-weight:bold;color:#000;font-family:'Liberation Serif',serif;">2</div>
<div class="t" style="left:190.85px;top:442.00px;font-size:24px;letter-spacing:0.147px;color:#000;font-family:'Liberation Serif',serif;">Monitor</div>
<div class="t" style="left:443.50px;top:442.00px;font-size:24px;color:#000;font-family:'Liberation Serif',serif;">5</div>
<div class="t" style="left:615.50px;top:442.00px;font-size:24px;letter-spacing:-1.000px;color:#000;font-family:'Liberation Serif',serif;">8000</div>
<div class="t" style="left:803.10px;top:442.00px;font-size:24px;letter-spacing:-0.733px;color:#000;font-family:'Liberation Serif',serif;">10%</div>
<div class="t" style="left:66.26px;top:473.00px;font-size:24px;letter-spacing:0.480px;font-weight:bold;color:#000;font-family:'Liberation Serif',serif;">3</div>
<div class="t" style="left:183.35px;top:473.00px;font-size:24px;letter-spacing:-0.023px;color:#000;font-family:'Liberation Serif',serif;">Smart TV</div>
<div class="t" style="left:443.50px;top:473.00px;font-size:24px;color:#000;font-family:'Liberation Serif',serif;">8</div>
<div class="t" style="left:610.00px;top:473.00px;font-size:24px;letter-spacing:-1.000px;color:#000;font-family:'Liberation Serif',serif;">30000</div>
<div class="t" style="left:803.10px;top:473.00px;font-size:24px;letter-spacing:-0.733px;color:#000;font-family:'Liberation Serif',serif;">15%</div>
<div class="t" style="left:66.26px;top:504.00px;font-size:24px;letter-spacing:0.480px;font-weight:bold;color:#000;font-family:'Liberation Serif',serif;">4</div>
<div class="t" style="left:166.18px;top:504.00px;font-size:24px;letter-spacing:0.375px;color:#000;font-family:'Liberation Serif',serif;">Apple Watch</div>
<div class="t" style="left:437.50px;top:504.00px;font-size:24px;color:#000;font-family:'Liberation Serif',serif;">12</div>
<div class="t" style="left:610.00px;top:504.00px;font-size:24px;letter-spacing:-1.000px;color:#000;font-family:'Liberation Serif',serif;">25000</div>
<div class="t" style="left:803.10px;top:504.00px;font-size:24px;letter-spacing:-0.733px;color:#000;font-family:'Liberation Serif',serif;">10%</div>
<div class="t" style="left:66.26px;top:535.00px;font-size:24px;letter-spacing:0.480px;font-weight:bold;color:#000;font-family:'Liberation Serif',serif;">5</div>
<div class="t" style="left:198.65px;top:535.00px;font-size:24px;letter-spacing:-0.246px;color:#000;font-family:'Liberation Serif',serif;">Mouse</div>
<div class="t" style="left:437.50px;top:535.00px;font-size:24px;color:#000;font-family:'Liberation Serif',serif;">40</div>
<div class="t" style="left:621.00px;top:535.00px;font-size:24px;letter-spacing:-1.000px;color:#000;font-family:'Liberation Serif',serif;">500</div>
<div class="t" style="left:808.80px;top:535.00px;font-size:24px;letter-spacing:-0.800px;color:#000;font-family:'Liberation Serif',serif;">5%</div>
<div class="t" style="left:66.26px;top:566.00px;font-size:24px;letter-spacing:0.480px;font-weight:bold;color:#000;font-family:'Liberation Serif',serif;">6</div>
<div class="t" style="left:196.55px;top:566.00px;font-size:24px;letter-spacing:0.426px;color:#000;font-family:'Liberation Serif',serif;">Printer</div>
<div class="t" style="left:443.50px;top:566.00px;font-size:24px;color:#000;font-family:'Liberation Serif',serif;">6</div>
<div class="t" style="left:610.00px;top:566.00px;font-size:24px;letter-spacing:-1.000px;color:#000;font-family:'Liberation Serif',serif;">10000</div>
<div class="t" style="left:808.80px;top:566.00px;font-size:24px;letter-spacing:-0.800px;color:#000;font-family:'Liberation Serif',serif;">5%</div>
<div class="t" style="left:66.26px;top:597.00px;font-size:24px;letter-spacing:0.480px;font-weight:bold;color:#000;font-family:'Liberation Serif',serif;">7</div>
<div class="t" style="left:174.90px;top:597.00px;font-size:24px;letter-spacing:0.257px;color:#000;font-family:'Liberation Serif',serif;">Headphone</div>
<div class="t" style="left:437.50px;top:597.00px;font-size:24px;color:#000;font-family:'Liberation Serif',serif;">25</div>
<div class="t" style="left:615.50px;top:597.00px;font-size:24px;letter-spacing:-1.000px;color:#000;font-family:'Liberation Serif',serif;">2000</div>
<div class="t" style="left:763.00px;top:597.00px;font-size:24px;color:#000;font-family:'Liberation Serif',serif;">No Discount</div>
<div class="t" style="left:66.26px;top:628.00px;font-size:24px;letter-spacing:0.480px;font-weight:bold;color:#000;font-family:'Liberation Serif',serif;">8</div>
<div class="t" style="left:184.15px;top:628.00px;font-size:24px;letter-spacing:-0.191px;color:#000;font-family:'Liberation Serif',serif;">Keyboard</div>
<div class="t" style="left:437.50px;top:628.00px;font-size:24px;color:#000;font-family:'Liberation Serif',serif;">30</div>
<div class="t" style="left:615.50px;top:628.00px;font-size:24px;letter-spacing:-1.000px;color:#000;font-family:'Liberation Serif',serif;">3000</div>
<div class="t" style="left:763.00px;top:628.00px;font-size:24px;color:#000;font-family:'Liberation Serif',serif;">No Discount</div>
</div>
<!-- SHEETBAR -->
<div id="sheetbar">
<div class="abs" style="left:0px;top:947px;width:1920px;height:1px;background:#dedede;"></div>
<div class="abs" style="left:0px;top:948px;width:1920px;height:40px;background:#f0f0f0;"></div>
<svg style="left:32px;top:960px;" width="8" height="12" viewBox="0 0 8 12"><path d="M7 0.5 L0.8 6 L7 11.5" fill="none" stroke="#8a8a8a" stroke-width="1.4" stroke-linecap="round" stroke-linejoin="round"/></svg>
<svg style="left:73px;top:960px;" width="8" height="12" viewBox="0 0 8 12"><path d="M1 0.5 L7.2 6 L1 11.5" fill="none" stroke="#8a8a8a" stroke-width="1.4" stroke-linecap="round" stroke-linejoin="round"/></svg>
<svg style="left:134px;top:947px;" width="86" height="38" viewBox="0 0 86 38"><path d="M2 0 Q6.8 0 6.8 5 V29.5 Q6.8 35 12.3 35 H73.8 Q79.3 35 79.3 29.5 V5 Q79.3 0 84 0 Z" fill="#fff" style="filter:drop-shadow(0 1px 1.2px rgba(0,0,0,.18))"/></svg>
<div class="t" style="left:151.20px;top:955.00px;font-size:18px;letter-spacing:-1.205px;font-weight:bold;color:#1a1a1a;">Sheet1</div>
<div class="abs" style="left:151px;top:977px;width:52px;height:2px;background:#107c41;border-radius:1px"></div>
<div class="abs" style="left:218px;top:955px;width:1px;height:24px;background:#c4c4c4;"></div>
<svg style="left:271.5px;top:958.5px;" width="14" height="14" viewBox="0 0 14 14"><path d="M7 0.5 V13.5 M0.5 7 H13.5" stroke="#3b3b3b" stroke-width="1.4" stroke-linecap="round"/></svg>
<div class="abs" style="left:1154px;top:960.5px;width:3px;height:3px;border-radius:0.6px;background:#4a4a4a"></div>
<div class="abs" style="left:1154px;top:965.5px;width:3px;height:3px;border-radius:0.6px;background:#4a4a4a"></div>
<div class="abs" style="left:1154px;top:970.5px;width:3px;height:3px;border-radius:0.6px;background:#4a4a4a"></div>
<div class="abs" style="left:1177px;top:956.7px;width:719.6px;height:20.3px;border-radius:10px;background:#f6f6f6"></div>
<svg style="left:1182px;top:961.3px;" width="9" height="11" viewBox="0 0 9 11"><path d="M8.5 0.5 V10.5 L0.5 5.5 Z" fill="#6e6e6e" stroke="#6e6e6e" stroke-width="0.6" stroke-linejoin="round"/></svg>
<div class="abs" style="left:1197px;top:961.3px;width:661px;height:10.8px;border-radius:5.4px;background:#6e6e6e"></div>
<svg style="left:1881.8px;top:961.3px;" width="9" height="11" viewBox="0 0 9 11"><path d="M0.5 0.5 V10.5 L8.5 5.5 Z" fill="#6e6e6e" stroke="#6e6e6e" stroke-width="0.6" stroke-linejoin="round"/></svg><div class="abs" style="left:1894px;top:353px;width:26px;height:594px;background:#f0f0f0;"></div>
<div class="abs" style="left:1897px;top:353.5px;width:20.5px;height:595.5px;border-radius:10px;background:#f6f6f6"></div>
<svg style="left:1901.5px;top:359px;" width="12" height="8" viewBox="0 0 12 8"><path d="M6 0.5 L11.5 7.5 H0.5 Z" fill="#6e6e6e" stroke="#6e6e6e" stroke-width="0.6" stroke-linejoin="round"/></svg>
<div class="abs" style="left:1902px;top:373px;width:11px;height:535px;border-radius:5.5px;background:#6e6e6e"></div>
<svg style="left:1901.5px;top:935.5px;" width="12" height="8" viewBox="0 0 12 8"><path d="M0.5 0.5 H11.5 L6 7.5 Z" fill="#6e6e6e" stroke="#6e6e6e" stroke-width="0.6" stroke-linejoin="round"/></svg>
</div>
<!-- STATUS -->
<div id="status">
<div class="abs" style="left:0px;top:987px;width:1920px;height:1px;background:#f9f9f9;"></div>
<div class="abs" style="left:0px;top:988px;width:1920px;height:26px;background:#f3f3f3;"></div>
<div class="t" style="left:15.50px;top:997.00px;font-size:14.5px;letter-spacing:-0.283px;color:#3b3b3b;">Ready</div>
<svg style="left:82px;top:993px;" width="22" height="21" viewBox="0 0 22 21"><circle cx="9" cy="3.2" r="2.2" fill="none" stroke="#3b3b3b" stroke-width="1.3"/><path d="M1 7 Q9 10 17 7 M6.3 8.6 V13 L3.5 19.5 M11.7 8.6 V13 L13 15" fill="none" stroke="#3b3b3b" stroke-width="1.3" stroke-linecap="round" stroke-linejoin="round"/><path d="M12 17 L15 20 L20.5 13" fill="none" stroke="#3b3b3b" stroke-width="1.4" stroke-linecap="round" stroke-linejoin="round"/></svg>
<div class="t" style="left:108.30px;top:997.00px;font-size:14.5px;letter-spacing:0.221px;color:#3b3b3b;">Accessibility: Good to go</div>
<div class="t" style="left:1129.00px;top:997.00px;font-size:14.5px;letter-spacing:0.395px;color:#3b3b3b;">Average: 3253.385</div>
<div class="t" style="left:1279.40px;top:997.00px;font-size:14.5px;letter-spacing:0.369px;color:#3b3b3b;">Count: 46</div>
<div class="t" style="left:1366.00px;top:997.00px;font-size:14.5px;letter-spacing:0.465px;color:#3b3b3b;">Sum: 97601.55</div>
<div class="abs" style="left:1496.5px;top:988px;width:53.5px;height:26px;background:#dedede;"></div>
<svg style="left:1512px;top:994px;" width="20" height="20" viewBox="0 0 20 20"><rect x="0.7" y="0.7" width="18.6" height="18.6" fill="none" stroke="#2b2b2b" stroke-width="1.4"/><path d="M0.7 7 H19.3 M0.7 13 H19.3 M7 0.7 V19.3 M13 0.7 V19.3" stroke="#2b2b2b" stroke-width="1.3"/></svg>
<svg style="left:1566.5px;top:994px;" width="21" height="20" viewBox="0 0 21 20"><rect x="0.7" y="0.7" width="19.2" height="18.6" fill="none" stroke="#2b2b2b" stroke-width="1.4"/><rect x="5" y="5" width="10.6" height="10" fill="none" stroke="#2b2b2b" stroke-width="1.2"/><path d="M7.5 8 H13 M7.5 10.2 H13 M7.5 12.4 H13" stroke="#2b2b2b" stroke-width="1"/></svg>
<svg style="left:1620px;top:994px;" width="22" height="20" viewBox="0 0 22 20"><path d="M0.7 0.7 H20.3 V19.3 H0.7 Z" fill="none" stroke="#2b2b2b" stroke-width="1.4"/><path d="M6.5 0.7 V11.5 H20.3 M13.5 0.7 V11.5" fill="none" stroke="#2b2b2b" stroke-width="1.3"/></svg>
<div class="abs" style="left:1664.7px;top:1003.5px;width:12px;height:1px;background:#3b3b3b;"></div>
<div class="abs" style="left:1683px;top:1003.5px;width:152.6px;height:1px;background:#6a6a6a;"></div>
<div class="abs" style="left:1756.5px;top:994.5px;width:6.5px;height:17px;background:#4a4a4a;border-radius:1px"></div>
<svg style="left:1842.3px;top:998.3px;" width="11" height="11" viewBox="0 0 11 11"><path d="M5.5 0 V11 M0 5.5 H11" stroke="#3b3b3b" stroke-width="1.3"/></svg>
<div class="t" style="left:1871.00px;top:997.00px;font-size:14.5px;letter-spacing:-0.521px;color:#3b3b3b;">100%</div>
</div>
<!-- MENU -->
<div id="menu">
<div class="t" style="left:17.70px;top:13.00px;font-size:18px;letter-spacing:-0.532px;font-weight:bold;color:#1a1a1a;">Borders</div>
<svg style="left:17px;top:51px;" width="24" height="24" viewBox="0 0 24 24"><rect x="0.5" y="0.5" width="20" height="20" fill="#f8f8f8"/><path d="M0 0.9 L21 0.9" stroke="#8c8c8c" stroke-width="1.7" stroke-dasharray="1.7 1.6" fill="none"/><path d="M0.9 0 L0.9 21" stroke="#8c8c8c" stroke-width="1.7" stroke-dasharray="1.7 1.6" fill="none"/><path d="M20.1 0 L20.1 21" stroke="#8c8c8c" stroke-width="1.7" stroke-dasharray="1.7 1.6" fill="none"/><path d="M10.5 0 L10.5 21" stroke="#8c8c8c" stroke-width="1.7" stroke-dasharray="1.7 1.6" fill="none"/><path d="M0 10.5 L21 10.5" stroke="#8c8c8c" stroke-width="1.7" stroke-dasharray="1.7 1.6" fill="none"/><path d="M0 20.5 L21 20.5" stroke="#5a5a5a" stroke-width="1.9" fill="none"/></svg>
<div class="t" style="left:51.30px;top:55.00px;font-size:18px;letter-spacing:0.111px;color:#242424;">B<span class="u">o</span>ttom Border</div>
<svg style="left:17px;top:91.80000000000001px;" width="24" height="24" viewBox="0 0 24 24"><rect x="0.5" y="0.5" width="20" height="20" fill="#f8f8f8"/><path d="M0 20.1 L21 20.1" stroke="#8c8c8c" stroke-width="1.7" stroke-dasharray="1.7 1.6" fill="none"/><path d="M0.9 0 L0.9 21" stroke="#8c8c8c" stroke-width="1.7" stroke-dasharray="1.7 1.6" fill="none"/><path d="M20.1 0 L20.1 21" stroke="#8c8c8c" stroke-width="1.7" stroke-dasharray="1.7 1.6" fill="none"/><path d="M10.5 0 L10.5 21" stroke="#8c8c8c" stroke-width="1.7" stroke-dasharray="1.7 1.6" fill="none"/><path d="M0 10.5 L21 10.5" stroke="#8c8c8c" stroke-width="1.7" stroke-dasharray="1.7 1.6" fill="none"/><path d="M0 0.5 L21 0.5" stroke="#5a5a5a" stroke-width="1.9" fill="none"/></svg>
<div class="t" style="left:51.30px;top:96.00px;font-size:18px;letter-spacing:0.035px;color:#242424;">To<span class="u">p</span> Border</div>
<svg style="left:17px;top:133px;" width="24" height="24" viewBox="0 0 24 24"><rect x="0.5" y="0.5" width="20" height="20" fill="#f8f8f8"/><path d="M0 0.9 L21 0.9" stroke="#8c8c8c" stroke-width="1.7" stroke-dasharray="1.7 1.6" fill="none"/><path d="M0 20.1 L21 20.1" stroke="#8c8c8c" stroke-width="1.7" stroke-dasharray="1.7 1.6" fill="none"/><path d="M20.1 0 L20.1 21" stroke="#8c8c8c" stroke-width="1.7" stroke-dasharray="1.7 1.6" fill="none"/><path d="M10.5 0 L10.5 21" stroke="#8c8c8c" stroke-width="1.7" stroke-dasharray="1.7 1.6" fill="none"/><path d="M0 10.5 L21 10.5" stroke="#8c8c8c" stroke-width="1.7" stroke-dasharray="1.7 1.6" fill="none"/><path d="M0.6 0 L0.6 21" stroke="#5a5a5a" stroke-width="1.9" fill="none"/></svg>
<div class="t" style="left:51.30px;top:137.00px;font-size:18px;letter-spacing:-0.241px;color:#242424;"><span class="u">L</span>eft Border</div>
<svg style="left:17px;top:174px;" width="24" height="24" viewBox="0 0 24 24"><rect x="0.5" y="0.5" width="20" height="20" fill="#f8f8f8"/><path d="M0 0.9 L21 0.9" stroke="#8c8c8c" stroke-width="1.7" stroke-dasharray="1.7 1.6" fill="none"/><path d="M0 20.1 L21 20.1" stroke="#8c8c8c" stroke-width="1.7" stroke-dasharray="1.7 1.6" fill="none"/><path d="M0.9 0 L0.9 21" stroke="#8c8c8c" stroke-width="1.7" stroke-dasharray="1.7 1.6" fill="none"/><path d="M10.5 0 L10.5 21" stroke="#8c8c8c" stroke-width="1.7" stroke-dasharray="1.7 1.6" fill="none"/><path d="M0 10.5 L21 10.5" stroke="#8c8c8c" stroke-width="1.7" stroke-dasharray="1.7 1.6" fill="none"/><path d="M20.4 0 L20.4 21" stroke="#5a5a5a" stroke-width="1.9" fill="none"/></svg>
<div class="t" style="left:51.30px;top:178.00px;font-size:18px;letter-spacing:-0.129px;color:#242424;"><span class="u">R</span>ight Border</div>
<svg style="left:17px;top:218px;" width="24" height="24" viewBox="0 0 24 24"><rect x="0.5" y="0.5" width="20" height="20" fill="#f8f8f8"/><path d="M0 0.9 L21 0.9" stroke="#8c8c8c" stroke-width="1.7" stroke-dasharray="1.7 1.6" fill="none"/><path d="M0 20.1 L21 20.1" stroke="#8c8c8c" stroke-width="1.7" stroke-dasharray="1.7 1.6" fill="none"/><path d="M0.9 0 L0.9 21" stroke="#8c8c8c" stroke-width="1.7" stroke-dasharray="1.7 1.6" fill="none"/><path d="M20.1 0 L20.1 21" stroke="#8c8c8c" stroke-width="1.7" stroke-dasharray="1.7 1.6" fill="none"/><path d="M10.5 0 L10.5 21" stroke="#8c8c8c" stroke-width="1.7" stroke-dasharray="1.7 1.6" fill="none"/><path d="M0 10.5 L21 10.5" stroke="#8c8c8c" stroke-width="1.7" stroke-dasharray="1.7 1.6" fill="none"/></svg>
<div class="t" style="left:51.30px;top:222.00px;font-size:18px;letter-spacing:-0.060px;color:#242424;"><span class="u">N</span>o Border</div>
<svg style="left:17px;top:259.3px;" width="24" height="24" viewBox="0 0 24 24"><rect x="0.8" y="0.8" width="19.4" height="19.4" fill="none" stroke="#2b2b2b" stroke-width="1.5"/><path d="M10.5 0.8 L10.5 20.2" stroke="#2b2b2b" stroke-width="1.5" fill="none"/><path d="M0.8 10.5 L20.2 10.5" stroke="#2b2b2b" stroke-width="1.5" fill="none"/></svg>
<div class="t" style="left:51.30px;top:263.00px;font-size:18px;letter-spacing:-0.303px;color:#242424;"><span class="u">A</span>ll Borders</div>
<svg style="left:17px;top:300.20000000000005px;" width="24" height="24" viewBox="0 0 24 24"><rect x="0.7" y="0.7" width="19.6" height="19.6" fill="#f8f8f8" stroke="#5a5a5a" stroke-width="1.4"/><path d="M10.5 1 V20 M1 10.5 H20" stroke="#6e6e6e" stroke-width="1.4" stroke-dasharray="1.6 1.6" fill="none"/></svg>
<div class="t" style="left:51.30px;top:304.00px;font-size:18px;letter-spacing:-0.197px;color:#242424;">Out<span class="u">s</span>ide Borders</div>
<svg style="left:17px;top:341.20000000000005px;" width="24" height="24" viewBox="0 0 24 24"><rect x="1.2" y="1.2" width="18.6" height="18.6" fill="#f8f8f8" stroke="#111" stroke-width="2.4"/><path d="M10.5 1 V20 M1 10.5 H20" stroke="#6e6e6e" stroke-width="1.4" stroke-dasharray="1.6 1.6" fill="none"/></svg>
<div class="t" style="left:51.30px;top:345.00px;font-size:18px;letter-spacing:-0.279px;color:#242424;"><span class="u">T</span>hick Outside Borders</div>
<svg style="left:17px;top:385px;" width="24" height="24" viewBox="0 0 24 24"><rect x="0.5" y="0.5" width="20" height="20" fill="#f8f8f8"/><path d="M0 0.9 L21 0.9" stroke="#8c8c8c" stroke-width="1.7" stroke-dasharray="1.7 1.6" fill="none"/><path d="M0.9 0 L0.9 21" stroke="#8c8c8c" stroke-width="1.7" stroke-dasharray="1.7 1.6" fill="none"/><path d="M20.1 0 L20.1 21" stroke="#8c8c8c" stroke-width="1.7" stroke-dasharray="1.7 1.6" fill="none"/><path d="M10.5 0 L10.5 21" stroke="#8c8c8c" stroke-width="1.7" stroke-dasharray="1.7 1.6" fill="none"/><path d="M0 10.5 L21 10.5" stroke="#8c8c8c" stroke-width="1.7" stroke-dasharray="1.7 1.6" fill="none"/><path d="M0 17.7 L21 17.7" stroke="#3b3b3b" stroke-width="1.2" fill="none"/><path d="M0 20.4 L21 20.4" stroke="#3b3b3b" stroke-width="1.2" fill="none"/></svg>
<div class="t" style="left:51.30px;top:389.00px;font-size:18px;letter-spacing:0.115px;color:#242424;"><span class="u">B</span>ottom Double Border</div>
<svg style="left:17px;top:426px;" width="24" height="24" viewBox="0 0 24 24"><rect x="0.5" y="0.5" width="20" height="20" fill="#f8f8f8"/><path d="M0 0.9 L21 0.9" stroke="#8c8c8c" stroke-width="1.7" stroke-dasharray="1.7 1.6" fill="none"/><path d="M0.9 0 L0.9 21" stroke="#8c8c8c" stroke-width="1.7" stroke-dasharray="1.7 1.6" fill="none"/><path d="M20.1 0 L20.1 21" stroke="#8c8c8c" stroke-width="1.7" stroke-dasharray="1.7 1.6" fill="none"/><path d="M10.5 0 L10.5 21" stroke="#8c8c8c" stroke-width="1.7" stroke-dasharray="1.7 1.6" fill="none"/><path d="M0 10.5 L21 10.5" stroke="#8c8c8c" stroke-width="1.7" stroke-dasharray="1.7 1.6" fill="none"/><path d="M0 19.8 L21 19.8" stroke="#111" stroke-width="2.4" fill="none"/></svg>
<div class="t" style="left:51.30px;top:430.00px;font-size:18px;letter-spacing:-0.087px;color:#242424;">T<span class="u">h</span>ick Bottom Border</div>
<svg style="left:17px;top:467px;" width="24" height="24" viewBox="0 0 24 24"><rect x="0.5" y="0.5" width="20" height="20" fill="#f8f8f8"/><path d="M0.9 0 L0.9 21" stroke="#b4b4b4" stroke-width="1.7" stroke-dasharray="1.7 1.6" fill="none"/><path d="M20.1 0 L20.1 21" stroke="#b4b4b4" stroke-width="1.7" stroke-dasharray="1.7 1.6" fill="none"/><path d="M10.5 0 L10.5 21" stroke="#b4b4b4" stroke-width="1.7" stroke-dasharray="1.7 1.6" fill="none"/><path d="M0 10.5 L21 10.5" stroke="#b4b4b4" stroke-width="1.7" stroke-dasharray="1.7 1.6" fill="none"/><path d="M0 0.5 L21 0.5" stroke="#8a8a8a" stroke-width="1.2" fill="none"/><path d="M0 20.4 L21 20.4" stroke="#8a8a8a" stroke-width="1.9" fill="none"/></svg>
<div class="t" style="left:51.30px;top:471.00px;font-size:18px;letter-spacing:0.147px;color:#242424;">Top an<span class="u">d</span> Bottom Border</div>
<svg style="left:17px;top:508px;" width="24" height="24" viewBox="0 0 24 24"><rect x="0.5" y="0.5" width="20" height="20" fill="#f8f8f8"/><path d="M0.9 0 L0.9 21" stroke="#8c8c8c" stroke-width="1.7" stroke-dasharray="1.7 1.6" fill="none"/><path d="M20.1 0 L20.1 21" stroke="#8c8c8c" stroke-width="1.7" stroke-dasharray="1.7 1.6" fill="none"/><path d="M10.5 0 L10.5 21" stroke="#8c8c8c" stroke-width="1.7" stroke-dasharray="1.7 1.6" fill="none"/><path d="M0 10.5 L21 10.5" stroke="#8c8c8c" stroke-width="1.7" stroke-dasharray="1.7 1.6" fill="none"/><path d="M0 0.6 L21 0.6" stroke="#3b3b3b" stroke-width="1.3" fill="none"/><path d="M0 19.8 L21 19.8" stroke="#111" stroke-width="2.4" fill="none"/></svg>
<div class="t" style="left:51.30px;top:512.00px;font-size:18px;letter-spacing:0.023px;color:#242424;">Top and Thi<span class="u">c</span>k Bottom Border</div>
<svg style="left:17px;top:549px;" width="24" height="24" viewBox="0 0 24 24"><rect x="0.5" y="0.5" width="20" height="20" fill="#f8f8f8"/><path d="M0.9 0 L0.9 21" stroke="#8c8c8c" stroke-width="1.7" stroke-dasharray="1.7 1.6" fill="none"/><path d="M20.1 0 L20.1 21" stroke="#8c8c8c" stroke-width="1.7" stroke-dasharray="1.7 1.6" fill="none"/><path d="M10.5 0 L10.5 21" stroke="#8c8c8c" stroke-width="1.7" stroke-dasharray="1.7 1.6" fill="none"/><path d="M0 10.5 L21 10.5" stroke="#8c8c8c" stroke-width="1.7" stroke-dasharray="1.7 1.6" fill="none"/><path d="M0 0.6 L21 0.6" stroke="#3b3b3b" stroke-width="1.3" fill="none"/><path d="M0 17.7 L21 17.7" stroke="#3b3b3b" stroke-width="1.2" fill="none"/><path d="M0 20.4 L21 20.4" stroke="#3b3b3b" stroke-width="1.2" fill="none"/></svg>
<div class="t" style="left:51.30px;top:553.00px;font-size:18px;letter-spacing:0.163px;color:#242424;">Top and Do<span class="u">u</span>ble Bottom Border</div>
<div class="abs" style="left:47px;top:208.8px;width:291px;height:1px;background:#d4d4d4;"></div>
<div class="abs" style="left:47px;top:375.29999999999995px;width:291px;height:1px;background:#d4d4d4;"></div>
<div class="abs" style="left:1px;top:583.7px;width:337px;height:1px;background:#d4d4d4;"></div>
<div class="t" style="left:17.70px;top:596.00px;font-size:18px;letter-spacing:-0.328px;font-weight:bold;color:#1a1a1a;">Draw Borders</div>
<svg style="left:17px;top:632px;" width="24" height="24" viewBox="0 0 24 24"><path d="M0.7 4 V21.3 H21 V11" fill="none" stroke="#5a5a5a" stroke-width="1.3"/><path d="M0.7 4 H11" stroke="#5a5a5a" stroke-width="1.3"/><path d="M0.7 12.5 H8 M8 4 V9 M8 16 V21 M15 17 V21" stroke="#7a7a7a" stroke-width="1.1"/><g transform="translate(5 -1) scale(1)"><path d="M13.5 1 L17 4.5 L6.5 15 L2 16 L3 11.5 Z" fill="#fff" stroke="#1e8ad6" stroke-width="1.3" stroke-linejoin="round"/><path d="M3 11.5 L6.5 15 L2 16 Z" fill="#1e8ad6"/><path d="M11.5 3 L15 6.5" stroke="#1e8ad6" stroke-width="1.1"/></g></svg>
<div class="t" style="left:51.30px;top:637.00px;font-size:18px;letter-spacing:-0.248px;color:#242424;">Dra<span class="u">w</span> Border</div>
<svg style="left:17px;top:674.5px;" width="24" height="24" viewBox="0 0 24 24"><path d="M0.7 0.7 V19.5 M0.7 0.7 H19.5 V4 M0.7 10 H12 M10 0.7 V11 M0.7 19.5 H5" fill="none" stroke="#5a5a5a" stroke-width="1.3"/><g transform="translate(5 5.5) scale(1)"><path d="M13.5 1 L17 4.5 L6.5 15 L2 16 L3 11.5 Z" fill="#fff" stroke="#1e8ad6" stroke-width="1.3" stroke-linejoin="round"/><path d="M3 11.5 L6.5 15 L2 16 Z" fill="#1e8ad6"/><path d="M11.5 3 L15 6.5" stroke="#1e8ad6" stroke-width="1.1"/></g></svg>
<div class="t" style="left:51.30px;top:678.00px;font-size:18px;letter-spacing:-0.252px;color:#242424;">Draw Border <span class="u">G</span>rid</div>
<svg style="left:16.600000000000023px;top:715.3px;" width="24" height="24" viewBox="0 0 24 24"><path d="M14.3 0.8 L21.4 7.6 L7.8 21.2 L0.7 13.8 Z" fill="#fff" stroke="#a93bb9" stroke-width="1.4" stroke-linejoin="round"/><path d="M5.3 9.2 L12.6 16.4 L7.8 21.2 L0.7 13.8 Z" fill="#d99be3" stroke="#a93bb9" stroke-width="1.4" stroke-linejoin="round"/></svg>
<div class="t" style="left:51.30px;top:719.00px;font-size:18px;letter-spacing:-0.621px;color:#242424;"><span class="u">E</span>rase Border</div>
<svg style="left:16px;top:757px;" width="24" height="24" viewBox="0 0 24 24"><path d="M16 1.5 H2.2 V14 H6.5" fill="none" stroke="#5a5a5a" stroke-width="1.4"/><g transform="translate(6 -1.5) scale(1)"><path d="M13.5 1 L17 4.5 L6.5 15 L2 16 L3 11.5 Z" fill="#fff" stroke="#1e8ad6" stroke-width="1.3" stroke-linejoin="round"/><path d="M3 11.5 L6.5 15 L2 16 Z" fill="#1e8ad6"/><path d="M11.5 3 L15 6.5" stroke="#1e8ad6" stroke-width="1.1"/></g><rect x="0" y="16" width="24" height="5.5" fill="#000"/></svg>
<div class="t" style="left:51.30px;top:760.00px;font-size:18px;letter-spacing:-0.335px;color:#242424;">L<span class="u">i</span>ne Color</div>
<svg style="left:317px;top:758.5px;" width="9" height="15" viewBox="0 0 9 15"><path d="M1 0.8 L8 7.5 L1 14.2" fill="none" stroke="#242424" stroke-width="1.5" stroke-linecap="round" stroke-linejoin="round"/></svg>
<div class="abs" style="left:1px;top:243px;width:338px;height:52px;border:6px solid #ec1c24"></div>
<div class="abs" style="left:1px;top:784px;width:337px;height:17px;background:#fff;border:1px solid #3b3b3b"></div>
<svg style="left:165.2px;top:791.5px;" width="6.4" height="3.6" viewBox="0 0 6.4 3.6"><path d="M0 0 L3.2 3.6 L6.4 0" fill="none" stroke="#242424" stroke-width="1.5" stroke-linecap="round" stroke-linejoin="round"/></svg>
</div>
</body>
</html>
